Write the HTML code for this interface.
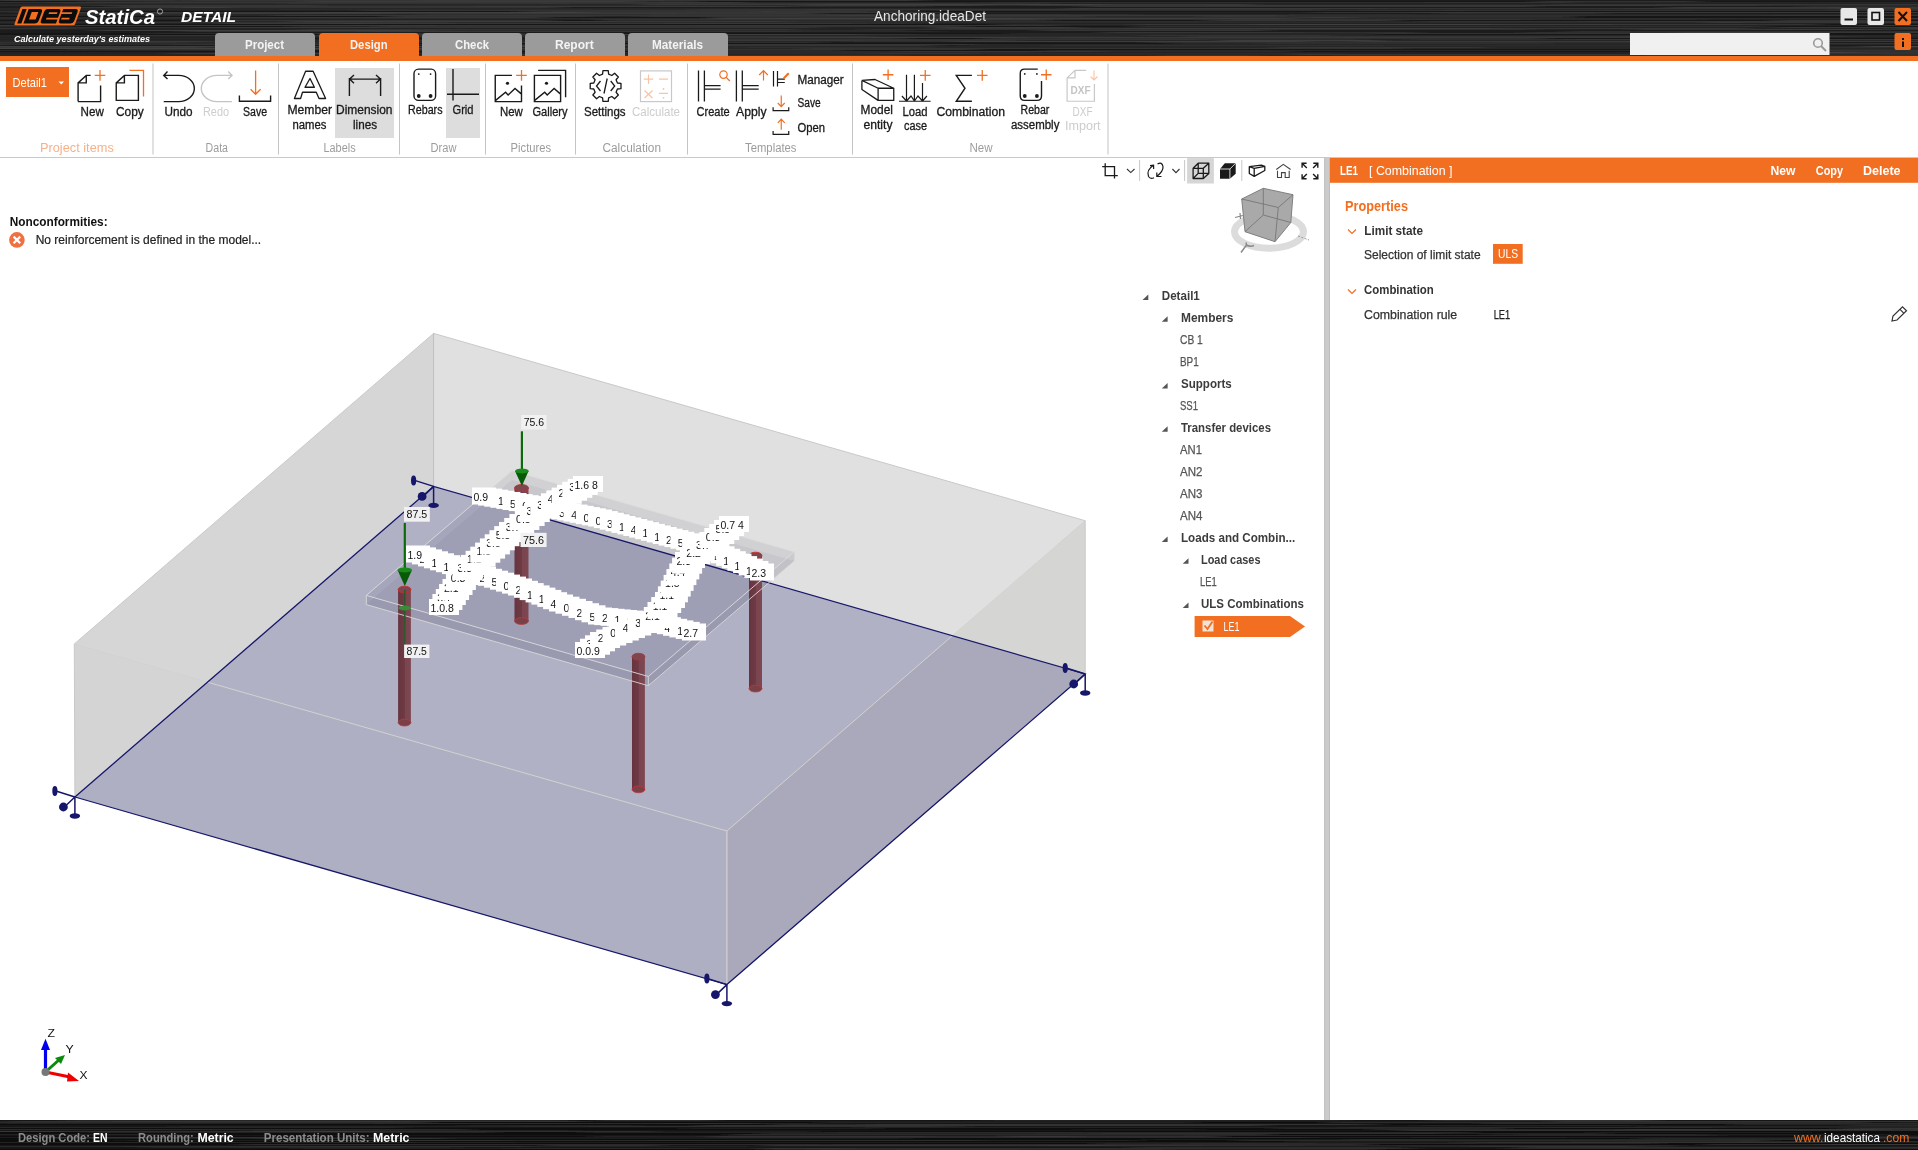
<!DOCTYPE html>
<html><head><meta charset="utf-8"><title>IDEA StatiCa Detail</title>
<style>html,body{margin:0;padding:0;background:#fff;overflow:hidden}svg{display:block}text{font-family:"Liberation Sans",sans-serif}</style>
</head><body><svg width="1918" height="1150" viewBox="0 0 1918 1150">
<rect x="0" y="0" width="1918" height="1150" fill="#ffffff" />
<defs><filter id="hblur" x="-5%" y="0" width="110%" height="100%"><feGaussianBlur stdDeviation="10 0.35"/></filter></defs>
<rect x="0" y="0" width="1918" height="56" fill="#141414" />
<g filter="url(#hblur)">
<rect x="-50" y="0" width="2018" height="1" fill="#1c1c1c" />
<rect x="417" y="0" width="504" height="1" fill="#444444" opacity="0.6"/>
<rect x="-3" y="0" width="174" height="1" fill="#4a4a4a" opacity="0.6"/>
<rect x="185" y="0" width="474" height="1" fill="#424242" opacity="0.6"/>
<rect x="37" y="0" width="619" height="1" fill="#363636" opacity="0.6"/>
<rect x="-50" y="1" width="2018" height="1" fill="#131313" />
<rect x="152" y="1" width="544" height="1" fill="#3d3d3d" opacity="0.6"/>
<rect x="86" y="1" width="346" height="1" fill="#323232" opacity="0.6"/>
<rect x="1538" y="1" width="160" height="1" fill="#4a4a4a" opacity="0.6"/>
<rect x="307" y="1" width="328" height="1" fill="#444444" opacity="0.6"/>
<rect x="-50" y="2" width="2018" height="1" fill="#262626" />
<rect x="53" y="2" width="690" height="1" fill="#424242" opacity="0.6"/>
<rect x="1424" y="2" width="150" height="1" fill="#373737" opacity="0.6"/>
<rect x="-10" y="2" width="670" height="1" fill="#343434" opacity="0.6"/>
<rect x="986" y="2" width="529" height="1" fill="#343434" opacity="0.6"/>
<rect x="-50" y="3" width="2018" height="1" fill="#232323" />
<rect x="282" y="3" width="684" height="1" fill="#393939" opacity="0.6"/>
<rect x="540" y="3" width="205" height="1" fill="#424242" opacity="0.6"/>
<rect x="569" y="3" width="481" height="1" fill="#333333" opacity="0.6"/>
<rect x="57" y="3" width="677" height="1" fill="#313131" opacity="0.6"/>
<rect x="-50" y="4" width="2018" height="1" fill="#252525" />
<rect x="643" y="4" width="608" height="1" fill="#454545" opacity="0.6"/>
<rect x="1551" y="4" width="421" height="1" fill="#3e3e3e" opacity="0.6"/>
<rect x="1656" y="4" width="470" height="1" fill="#393939" opacity="0.6"/>
<rect x="817" y="4" width="284" height="1" fill="#464646" opacity="0.6"/>
<rect x="-50" y="5" width="2018" height="1" fill="#2a2a2a" />
<rect x="799" y="5" width="183" height="1" fill="#424242" opacity="0.6"/>
<rect x="1029" y="5" width="637" height="1" fill="#3f3f3f" opacity="0.6"/>
<rect x="1206" y="5" width="559" height="1" fill="#393939" opacity="0.6"/>
<rect x="99" y="5" width="220" height="1" fill="#404040" opacity="0.6"/>
<rect x="-50" y="6" width="2018" height="1" fill="#1f1f1f" />
<rect x="475" y="6" width="450" height="1" fill="#343434" opacity="0.6"/>
<rect x="1802" y="6" width="531" height="1" fill="#313131" opacity="0.6"/>
<rect x="117" y="6" width="671" height="1" fill="#424242" opacity="0.6"/>
<rect x="1085" y="6" width="448" height="1" fill="#464646" opacity="0.6"/>
<rect x="-50" y="7" width="2018" height="1" fill="#1d1d1d" />
<rect x="1834" y="7" width="693" height="1" fill="#494949" opacity="0.6"/>
<rect x="1668" y="7" width="170" height="1" fill="#4a4a4a" opacity="0.6"/>
<rect x="183" y="7" width="376" height="1" fill="#3f3f3f" opacity="0.6"/>
<rect x="66" y="7" width="162" height="1" fill="#474747" opacity="0.6"/>
<rect x="-50" y="8" width="2018" height="1" fill="#282828" />
<rect x="1068" y="8" width="691" height="1" fill="#454545" opacity="0.6"/>
<rect x="1625" y="8" width="391" height="1" fill="#464646" opacity="0.6"/>
<rect x="1380" y="8" width="455" height="1" fill="#303030" opacity="0.6"/>
<rect x="1691" y="8" width="463" height="1" fill="#353535" opacity="0.6"/>
<rect x="-50" y="9" width="2018" height="1" fill="#252525" />
<rect x="279" y="9" width="605" height="1" fill="#313131" opacity="0.6"/>
<rect x="693" y="9" width="394" height="1" fill="#343434" opacity="0.6"/>
<rect x="814" y="9" width="507" height="1" fill="#3c3c3c" opacity="0.6"/>
<rect x="1833" y="9" width="182" height="1" fill="#353535" opacity="0.6"/>
<rect x="-50" y="10" width="2018" height="1" fill="#202020" />
<rect x="1445" y="10" width="662" height="1" fill="#383838" opacity="0.6"/>
<rect x="360" y="10" width="540" height="1" fill="#414141" opacity="0.6"/>
<rect x="940" y="10" width="525" height="1" fill="#3b3b3b" opacity="0.6"/>
<rect x="1358" y="10" width="336" height="1" fill="#343434" opacity="0.6"/>
<rect x="-50" y="11" width="2018" height="1" fill="#141414" />
<rect x="521" y="11" width="254" height="1" fill="#373737" opacity="0.6"/>
<rect x="755" y="11" width="112" height="1" fill="#3f3f3f" opacity="0.6"/>
<rect x="546" y="11" width="369" height="1" fill="#393939" opacity="0.6"/>
<rect x="-184" y="11" width="249" height="1" fill="#3d3d3d" opacity="0.6"/>
<rect x="-50" y="12" width="2018" height="1" fill="#232323" />
<rect x="1312" y="12" width="679" height="1" fill="#3a3a3a" opacity="0.6"/>
<rect x="314" y="12" width="627" height="1" fill="#434343" opacity="0.6"/>
<rect x="21" y="12" width="567" height="1" fill="#484848" opacity="0.6"/>
<rect x="1407" y="12" width="507" height="1" fill="#3c3c3c" opacity="0.6"/>
<rect x="-50" y="13" width="2018" height="1" fill="#1e1e1e" />
<rect x="224" y="13" width="593" height="1" fill="#444444" opacity="0.6"/>
<rect x="1440" y="13" width="163" height="1" fill="#363636" opacity="0.6"/>
<rect x="75" y="13" width="313" height="1" fill="#3e3e3e" opacity="0.6"/>
<rect x="464" y="13" width="212" height="1" fill="#3a3a3a" opacity="0.6"/>
<rect x="-50" y="14" width="2018" height="1" fill="#252525" />
<rect x="15" y="14" width="204" height="1" fill="#303030" opacity="0.6"/>
<rect x="419" y="14" width="649" height="1" fill="#333333" opacity="0.6"/>
<rect x="1289" y="14" width="126" height="1" fill="#323232" opacity="0.6"/>
<rect x="651" y="14" width="485" height="1" fill="#343434" opacity="0.6"/>
<rect x="-50" y="15" width="2018" height="1" fill="#262626" />
<rect x="833" y="15" width="455" height="1" fill="#434343" opacity="0.6"/>
<rect x="1291" y="15" width="585" height="1" fill="#333333" opacity="0.6"/>
<rect x="272" y="15" width="599" height="1" fill="#3e3e3e" opacity="0.6"/>
<rect x="1767" y="15" width="595" height="1" fill="#393939" opacity="0.6"/>
<rect x="-50" y="16" width="2018" height="1" fill="#141414" />
<rect x="390" y="16" width="204" height="1" fill="#474747" opacity="0.6"/>
<rect x="1203" y="16" width="371" height="1" fill="#3f3f3f" opacity="0.6"/>
<rect x="461" y="16" width="628" height="1" fill="#303030" opacity="0.6"/>
<rect x="640" y="16" width="640" height="1" fill="#3b3b3b" opacity="0.6"/>
<rect x="-50" y="17" width="2018" height="1" fill="#161616" />
<rect x="-90" y="17" width="640" height="1" fill="#393939" opacity="0.6"/>
<rect x="172" y="17" width="367" height="1" fill="#404040" opacity="0.6"/>
<rect x="1302" y="17" width="271" height="1" fill="#3b3b3b" opacity="0.6"/>
<rect x="712" y="17" width="645" height="1" fill="#414141" opacity="0.6"/>
<rect x="-50" y="18" width="2018" height="1" fill="#2a2a2a" />
<rect x="1859" y="18" width="437" height="1" fill="#444444" opacity="0.6"/>
<rect x="713" y="18" width="299" height="1" fill="#494949" opacity="0.6"/>
<rect x="780" y="18" width="510" height="1" fill="#474747" opacity="0.6"/>
<rect x="728" y="18" width="304" height="1" fill="#404040" opacity="0.6"/>
<rect x="-50" y="19" width="2018" height="1" fill="#212121" />
<rect x="1256" y="19" width="129" height="1" fill="#303030" opacity="0.6"/>
<rect x="944" y="19" width="583" height="1" fill="#383838" opacity="0.6"/>
<rect x="593" y="19" width="452" height="1" fill="#3e3e3e" opacity="0.6"/>
<rect x="1231" y="19" width="473" height="1" fill="#323232" opacity="0.6"/>
<rect x="-50" y="20" width="2018" height="1" fill="#191919" />
<rect x="218" y="20" width="332" height="1" fill="#3f3f3f" opacity="0.6"/>
<rect x="605" y="20" width="445" height="1" fill="#363636" opacity="0.6"/>
<rect x="1776" y="20" width="101" height="1" fill="#3f3f3f" opacity="0.6"/>
<rect x="1209" y="20" width="186" height="1" fill="#4a4a4a" opacity="0.6"/>
<rect x="-50" y="21" width="2018" height="1" fill="#272727" />
<rect x="291" y="21" width="497" height="1" fill="#494949" opacity="0.6"/>
<rect x="616" y="21" width="589" height="1" fill="#353535" opacity="0.6"/>
<rect x="1577" y="21" width="440" height="1" fill="#323232" opacity="0.6"/>
<rect x="1421" y="21" width="574" height="1" fill="#3c3c3c" opacity="0.6"/>
<rect x="-50" y="22" width="2018" height="1" fill="#292929" />
<rect x="147" y="22" width="262" height="1" fill="#353535" opacity="0.6"/>
<rect x="320" y="22" width="128" height="1" fill="#343434" opacity="0.6"/>
<rect x="1706" y="22" width="249" height="1" fill="#434343" opacity="0.6"/>
<rect x="1742" y="22" width="458" height="1" fill="#343434" opacity="0.6"/>
<rect x="-50" y="23" width="2018" height="1" fill="#232323" />
<rect x="336" y="23" width="121" height="1" fill="#303030" opacity="0.6"/>
<rect x="220" y="23" width="639" height="1" fill="#474747" opacity="0.6"/>
<rect x="370" y="23" width="544" height="1" fill="#363636" opacity="0.6"/>
<rect x="664" y="23" width="128" height="1" fill="#383838" opacity="0.6"/>
<rect x="-50" y="24" width="2018" height="1" fill="#181818" />
<rect x="999" y="24" width="613" height="1" fill="#373737" opacity="0.6"/>
<rect x="1135" y="24" width="365" height="1" fill="#414141" opacity="0.6"/>
<rect x="1516" y="24" width="234" height="1" fill="#313131" opacity="0.6"/>
<rect x="1249" y="24" width="569" height="1" fill="#454545" opacity="0.6"/>
<rect x="-50" y="25" width="2018" height="1" fill="#242424" />
<rect x="1916" y="25" width="530" height="1" fill="#4a4a4a" opacity="0.6"/>
<rect x="1854" y="25" width="233" height="1" fill="#414141" opacity="0.6"/>
<rect x="421" y="25" width="636" height="1" fill="#404040" opacity="0.6"/>
<rect x="-124" y="25" width="550" height="1" fill="#484848" opacity="0.6"/>
<rect x="-50" y="26" width="2018" height="1" fill="#171717" />
<rect x="-184" y="26" width="253" height="1" fill="#353535" opacity="0.6"/>
<rect x="379" y="26" width="584" height="1" fill="#434343" opacity="0.6"/>
<rect x="292" y="26" width="669" height="1" fill="#313131" opacity="0.6"/>
<rect x="1135" y="26" width="630" height="1" fill="#404040" opacity="0.6"/>
<rect x="-50" y="27" width="2018" height="1" fill="#232323" />
<rect x="1776" y="27" width="208" height="1" fill="#414141" opacity="0.6"/>
<rect x="32" y="27" width="354" height="1" fill="#363636" opacity="0.6"/>
<rect x="934" y="27" width="143" height="1" fill="#484848" opacity="0.6"/>
<rect x="200" y="27" width="619" height="1" fill="#3e3e3e" opacity="0.6"/>
<rect x="-50" y="28" width="2018" height="1" fill="#232323" />
<rect x="-86" y="28" width="164" height="1" fill="#3e3e3e" opacity="0.6"/>
<rect x="1133" y="28" width="617" height="1" fill="#434343" opacity="0.6"/>
<rect x="1897" y="28" width="304" height="1" fill="#464646" opacity="0.6"/>
<rect x="935" y="28" width="563" height="1" fill="#404040" opacity="0.6"/>
<rect x="-50" y="29" width="2018" height="1" fill="#232323" />
<rect x="1758" y="29" width="619" height="1" fill="#373737" opacity="0.6"/>
<rect x="863" y="29" width="672" height="1" fill="#363636" opacity="0.6"/>
<rect x="1633" y="29" width="240" height="1" fill="#3d3d3d" opacity="0.6"/>
<rect x="298" y="29" width="501" height="1" fill="#3e3e3e" opacity="0.6"/>
<rect x="-50" y="30" width="2018" height="1" fill="#1c1c1c" />
<rect x="97" y="30" width="346" height="1" fill="#3d3d3d" opacity="0.6"/>
<rect x="99" y="30" width="317" height="1" fill="#454545" opacity="0.6"/>
<rect x="1040" y="30" width="225" height="1" fill="#484848" opacity="0.6"/>
<rect x="432" y="30" width="474" height="1" fill="#343434" opacity="0.6"/>
<rect x="-50" y="31" width="2018" height="1" fill="#1a1a1a" />
<rect x="362" y="31" width="578" height="1" fill="#373737" opacity="0.6"/>
<rect x="185" y="31" width="507" height="1" fill="#3f3f3f" opacity="0.6"/>
<rect x="466" y="31" width="329" height="1" fill="#353535" opacity="0.6"/>
<rect x="1567" y="31" width="627" height="1" fill="#3c3c3c" opacity="0.6"/>
<rect x="-50" y="32" width="2018" height="1" fill="#1c1c1c" />
<rect x="1525" y="32" width="300" height="1" fill="#3b3b3b" opacity="0.6"/>
<rect x="1104" y="32" width="194" height="1" fill="#474747" opacity="0.6"/>
<rect x="1298" y="32" width="119" height="1" fill="#3a3a3a" opacity="0.6"/>
<rect x="1678" y="32" width="551" height="1" fill="#464646" opacity="0.6"/>
<rect x="-50" y="33" width="2018" height="1" fill="#121212" />
<rect x="1374" y="33" width="439" height="1" fill="#404040" opacity="0.6"/>
<rect x="1010" y="33" width="624" height="1" fill="#323232" opacity="0.6"/>
<rect x="262" y="33" width="334" height="1" fill="#333333" opacity="0.6"/>
<rect x="144" y="33" width="371" height="1" fill="#383838" opacity="0.6"/>
<rect x="-50" y="34" width="2018" height="1" fill="#131313" />
<rect x="543" y="34" width="376" height="1" fill="#484848" opacity="0.6"/>
<rect x="330" y="34" width="532" height="1" fill="#454545" opacity="0.6"/>
<rect x="859" y="34" width="515" height="1" fill="#343434" opacity="0.6"/>
<rect x="1908" y="34" width="684" height="1" fill="#3f3f3f" opacity="0.6"/>
<rect x="-50" y="35" width="2018" height="1" fill="#282828" />
<rect x="1139" y="35" width="191" height="1" fill="#383838" opacity="0.6"/>
<rect x="35" y="35" width="287" height="1" fill="#3d3d3d" opacity="0.6"/>
<rect x="96" y="35" width="375" height="1" fill="#303030" opacity="0.6"/>
<rect x="162" y="35" width="366" height="1" fill="#323232" opacity="0.6"/>
<rect x="-50" y="36" width="2018" height="1" fill="#252525" />
<rect x="710" y="36" width="168" height="1" fill="#383838" opacity="0.6"/>
<rect x="298" y="36" width="564" height="1" fill="#303030" opacity="0.6"/>
<rect x="1189" y="36" width="666" height="1" fill="#3d3d3d" opacity="0.6"/>
<rect x="897" y="36" width="232" height="1" fill="#313131" opacity="0.6"/>
<rect x="-50" y="37" width="2018" height="1" fill="#222222" />
<rect x="776" y="37" width="212" height="1" fill="#353535" opacity="0.6"/>
<rect x="872" y="37" width="151" height="1" fill="#353535" opacity="0.6"/>
<rect x="626" y="37" width="419" height="1" fill="#444444" opacity="0.6"/>
<rect x="1049" y="37" width="643" height="1" fill="#484848" opacity="0.6"/>
<rect x="-50" y="38" width="2018" height="1" fill="#181818" />
<rect x="987" y="38" width="556" height="1" fill="#404040" opacity="0.6"/>
<rect x="528" y="38" width="377" height="1" fill="#3b3b3b" opacity="0.6"/>
<rect x="-126" y="38" width="356" height="1" fill="#313131" opacity="0.6"/>
<rect x="-138" y="38" width="118" height="1" fill="#474747" opacity="0.6"/>
<rect x="-50" y="39" width="2018" height="1" fill="#222222" />
<rect x="576" y="39" width="626" height="1" fill="#3f3f3f" opacity="0.6"/>
<rect x="806" y="39" width="557" height="1" fill="#333333" opacity="0.6"/>
<rect x="1570" y="39" width="606" height="1" fill="#414141" opacity="0.6"/>
<rect x="1410" y="39" width="618" height="1" fill="#393939" opacity="0.6"/>
<rect x="-50" y="40" width="2018" height="1" fill="#282828" />
<rect x="681" y="40" width="335" height="1" fill="#3a3a3a" opacity="0.6"/>
<rect x="613" y="40" width="243" height="1" fill="#3c3c3c" opacity="0.6"/>
<rect x="1223" y="40" width="155" height="1" fill="#4a4a4a" opacity="0.6"/>
<rect x="331" y="40" width="114" height="1" fill="#323232" opacity="0.6"/>
<rect x="-50" y="41" width="2018" height="1" fill="#262626" />
<rect x="846" y="41" width="541" height="1" fill="#353535" opacity="0.6"/>
<rect x="26" y="41" width="186" height="1" fill="#454545" opacity="0.6"/>
<rect x="1360" y="41" width="618" height="1" fill="#454545" opacity="0.6"/>
<rect x="954" y="41" width="348" height="1" fill="#464646" opacity="0.6"/>
<rect x="-50" y="42" width="2018" height="1" fill="#1b1b1b" />
<rect x="-15" y="42" width="570" height="1" fill="#353535" opacity="0.6"/>
<rect x="445" y="42" width="375" height="1" fill="#3e3e3e" opacity="0.6"/>
<rect x="-186" y="42" width="369" height="1" fill="#3b3b3b" opacity="0.6"/>
<rect x="1147" y="42" width="660" height="1" fill="#3a3a3a" opacity="0.6"/>
<rect x="-50" y="43" width="2018" height="1" fill="#191919" />
<rect x="-59" y="43" width="416" height="1" fill="#363636" opacity="0.6"/>
<rect x="1260" y="43" width="287" height="1" fill="#303030" opacity="0.6"/>
<rect x="1173" y="43" width="490" height="1" fill="#323232" opacity="0.6"/>
<rect x="1744" y="43" width="385" height="1" fill="#404040" opacity="0.6"/>
<rect x="-50" y="44" width="2018" height="1" fill="#262626" />
<rect x="623" y="44" width="354" height="1" fill="#404040" opacity="0.6"/>
<rect x="-180" y="44" width="193" height="1" fill="#383838" opacity="0.6"/>
<rect x="167" y="44" width="247" height="1" fill="#3c3c3c" opacity="0.6"/>
<rect x="-30" y="44" width="503" height="1" fill="#303030" opacity="0.6"/>
<rect x="-50" y="45" width="2018" height="1" fill="#1b1b1b" />
<rect x="1046" y="45" width="338" height="1" fill="#323232" opacity="0.6"/>
<rect x="435" y="45" width="498" height="1" fill="#484848" opacity="0.6"/>
<rect x="1135" y="45" width="606" height="1" fill="#343434" opacity="0.6"/>
<rect x="963" y="45" width="248" height="1" fill="#313131" opacity="0.6"/>
<rect x="-50" y="46" width="2018" height="1" fill="#282828" />
<rect x="1901" y="46" width="539" height="1" fill="#474747" opacity="0.6"/>
<rect x="1870" y="46" width="242" height="1" fill="#404040" opacity="0.6"/>
<rect x="1865" y="46" width="682" height="1" fill="#4a4a4a" opacity="0.6"/>
<rect x="-135" y="46" width="698" height="1" fill="#494949" opacity="0.6"/>
<rect x="-50" y="47" width="2018" height="1" fill="#282828" />
<rect x="741" y="47" width="187" height="1" fill="#303030" opacity="0.6"/>
<rect x="-29" y="47" width="236" height="1" fill="#444444" opacity="0.6"/>
<rect x="1277" y="47" width="207" height="1" fill="#3c3c3c" opacity="0.6"/>
<rect x="1648" y="47" width="671" height="1" fill="#313131" opacity="0.6"/>
<rect x="-50" y="48" width="2018" height="1" fill="#262626" />
<rect x="-123" y="48" width="644" height="1" fill="#454545" opacity="0.6"/>
<rect x="801" y="48" width="601" height="1" fill="#383838" opacity="0.6"/>
<rect x="-187" y="48" width="567" height="1" fill="#494949" opacity="0.6"/>
<rect x="87" y="48" width="615" height="1" fill="#414141" opacity="0.6"/>
<rect x="-50" y="49" width="2018" height="1" fill="#141414" />
<rect x="70" y="49" width="585" height="1" fill="#383838" opacity="0.6"/>
<rect x="104" y="49" width="371" height="1" fill="#373737" opacity="0.6"/>
<rect x="640" y="49" width="336" height="1" fill="#474747" opacity="0.6"/>
<rect x="1685" y="49" width="605" height="1" fill="#3c3c3c" opacity="0.6"/>
<rect x="-50" y="50" width="2018" height="1" fill="#141414" />
<rect x="1762" y="50" width="394" height="1" fill="#484848" opacity="0.6"/>
<rect x="-9" y="50" width="303" height="1" fill="#323232" opacity="0.6"/>
<rect x="403" y="50" width="439" height="1" fill="#383838" opacity="0.6"/>
<rect x="1046" y="50" width="681" height="1" fill="#343434" opacity="0.6"/>
<rect x="-50" y="51" width="2018" height="1" fill="#121212" />
<rect x="1775" y="51" width="162" height="1" fill="#3f3f3f" opacity="0.6"/>
<rect x="900" y="51" width="201" height="1" fill="#464646" opacity="0.6"/>
<rect x="691" y="51" width="601" height="1" fill="#393939" opacity="0.6"/>
<rect x="1915" y="51" width="392" height="1" fill="#3e3e3e" opacity="0.6"/>
<rect x="-50" y="52" width="2018" height="1" fill="#202020" />
<rect x="1710" y="52" width="221" height="1" fill="#414141" opacity="0.6"/>
<rect x="616" y="52" width="419" height="1" fill="#323232" opacity="0.6"/>
<rect x="1737" y="52" width="117" height="1" fill="#393939" opacity="0.6"/>
<rect x="1679" y="52" width="178" height="1" fill="#4a4a4a" opacity="0.6"/>
<rect x="-50" y="53" width="2018" height="1" fill="#222222" />
<rect x="1640" y="53" width="375" height="1" fill="#3c3c3c" opacity="0.6"/>
<rect x="659" y="53" width="315" height="1" fill="#323232" opacity="0.6"/>
<rect x="169" y="53" width="245" height="1" fill="#474747" opacity="0.6"/>
<rect x="872" y="53" width="468" height="1" fill="#343434" opacity="0.6"/>
<rect x="-50" y="54" width="2018" height="1" fill="#252525" />
<rect x="1883" y="54" width="386" height="1" fill="#333333" opacity="0.6"/>
<rect x="1295" y="54" width="336" height="1" fill="#3f3f3f" opacity="0.6"/>
<rect x="1791" y="54" width="503" height="1" fill="#303030" opacity="0.6"/>
<rect x="451" y="54" width="103" height="1" fill="#3f3f3f" opacity="0.6"/>
<rect x="-50" y="55" width="2018" height="1" fill="#272727" />
<rect x="1646" y="55" width="515" height="1" fill="#393939" opacity="0.6"/>
<rect x="376" y="55" width="526" height="1" fill="#3b3b3b" opacity="0.6"/>
<rect x="1340" y="55" width="423" height="1" fill="#333333" opacity="0.6"/>
<rect x="1157" y="55" width="101" height="1" fill="#3a3a3a" opacity="0.6"/>
</g>
<rect x="0" y="56" width="1918" height="5" fill="#f26f21" />
<g transform="translate(20.8,6.6) skewX(-20)">
<rect x="0" y="0" width="60.7" height="18.7" rx="1.5" fill="#f26f21"/>
<rect x="2.5" y="2.3" width="4.2" height="14.5" fill="#0c0c0c"/>
<path d="M8.7,2.3 L20,2.3 Q23,2.3 23,5.3 L23,13.8 Q23,16.8 20,16.8 L8.7,16.8 Z" fill="#0c0c0c"/>
<rect x="12.9" y="5.4" width="6.6" height="7.4" fill="#f26f21"/>
<path d="M27.8,2.3 L38.5,2.3 Q41.3,2.3 41.3,5.3 L41.3,11.2 L29.8,11.2 L29.8,12.9 L41.3,12.9 L41.3,16.8 L27.8,16.8 Q25.2,16.8 25.2,13.8 L25.2,5.3 Q25.2,2.3 27.8,2.3 Z" fill="#0c0c0c"/>
<rect x="30.4" y="5.6" width="8.4" height="1.9" fill="#f26f21"/>
<path d="M43.3,2.3 L55.6,2.3 Q58.6,2.3 58.6,5.3 L58.6,13.8 Q58.6,16.8 55.6,16.8 L46.3,16.8 Q43.3,16.8 43.3,13.8 L43.3,11.2 L45,11.2 L45,12.9 L53,12.9 L53,11.2 L43.3,11.2 L43.3,7.4 L53.5,7.4 L53.5,5.6 L43.3,5.6 Z" fill="#0c0c0c"/>
</g>
<text x="85.0" y="23.5" font-size="20" fill="#ffffff" font-weight="bold" font-style="italic" text-anchor="start" textLength="70.0" lengthAdjust="spacingAndGlyphs" >StatiCa</text>
<circle cx="160" cy="11.5" r="2.6" fill="none" stroke="#bbbbbb" stroke-width="0.8"/>
<text x="181.0" y="21.5" font-size="15" fill="#ffffff" font-weight="bold" font-style="italic" text-anchor="start" textLength="55.0" lengthAdjust="spacingAndGlyphs" >DETAIL</text>
<text x="14.0" y="42.4" font-size="9.5" fill="#ffffff" font-weight="bold" font-style="italic" text-anchor="start" textLength="136.0" lengthAdjust="spacingAndGlyphs" >Calculate yesterday&#x27;s estimates</text>
<text x="874.0" y="21.3" font-size="14" fill="#e6e6e6" font-weight="normal" font-style="normal" text-anchor="start" textLength="112.0" lengthAdjust="spacingAndGlyphs" >Anchoring.ideaDet</text>
<path d="M215,56 L215,37 Q215,33 219,33 L311,33 Q315,33 315,37 L315,56 Z" fill="#9b9b9b" stroke="none" stroke-width="1" />
<text x="245.0" y="48.8" font-size="13" fill="#f4f4f4" font-weight="bold" font-style="normal" text-anchor="start" textLength="39.0" lengthAdjust="spacingAndGlyphs" >Project</text>
<path d="M319,56 L319,37 Q319,33 323,33 L415,33 Q419,33 419,37 L419,56 Z" fill="#f26f21" stroke="none" stroke-width="1" />
<text x="350.0" y="48.8" font-size="13" fill="#f4f4f4" font-weight="bold" font-style="normal" text-anchor="start" textLength="37.5" lengthAdjust="spacingAndGlyphs" >Design</text>
<path d="M422,56 L422,37 Q422,33 426,33 L518,33 Q522,33 522,37 L522,56 Z" fill="#9b9b9b" stroke="none" stroke-width="1" />
<text x="455.0" y="48.8" font-size="13" fill="#f4f4f4" font-weight="bold" font-style="normal" text-anchor="start" textLength="34.0" lengthAdjust="spacingAndGlyphs" >Check</text>
<path d="M525,56 L525,37 Q525,33 529,33 L621,33 Q625,33 625,37 L625,56 Z" fill="#9b9b9b" stroke="none" stroke-width="1" />
<text x="555.0" y="48.8" font-size="13" fill="#f4f4f4" font-weight="bold" font-style="normal" text-anchor="start" textLength="38.7" lengthAdjust="spacingAndGlyphs" >Report</text>
<path d="M628,56 L628,37 Q628,33 632,33 L724,33 Q728,33 728,37 L728,56 Z" fill="#9b9b9b" stroke="none" stroke-width="1" />
<text x="652.0" y="48.8" font-size="13" fill="#f4f4f4" font-weight="bold" font-style="normal" text-anchor="start" textLength="51.0" lengthAdjust="spacingAndGlyphs" >Materials</text>
<rect x="1840.5" y="8" width="16.5" height="17" rx="2" fill="#e8e8e8"/>
<rect x="1844.5" y="18.5" width="8.5" height="2" fill="#111" />
<rect x="1867.5" y="8" width="16.5" height="17" rx="2" fill="#e8e8e8"/>
<rect x="1872" y="12.5" width="7.5" height="7.5" fill="none" stroke="#111" stroke-width="1.6"/>
<rect x="1894.5" y="8" width="16.5" height="17" rx="2" fill="#f26f21"/>
<path d="M1898.5,12 L1907,21 M1907,12 L1898.5,21" fill="none" stroke="#111" stroke-width="2" />
<rect x="1894.5" y="33" width="16.5" height="17" rx="2" fill="#f26f21"/>
<rect x="1902" y="38" width="2" height="2" fill="#111" />
<rect x="1902" y="41.5" width="2" height="5.5" fill="#111" />
<rect x="1630" y="33" width="199.5" height="22" fill="#f0f0f0" />
<circle cx="1818" cy="43" r="4.3" fill="none" stroke="#9a9a9a" stroke-width="1.6"/>
<line x1="1821" y1="46" x2="1826" y2="51" stroke="#9a9a9a" stroke-width="2" />
<rect x="0" y="157" width="1918" height="1" fill="#c9c9c9" />
<rect x="152.5" y="63.5" width="1" height="91" fill="#c4c4c4" />
<rect x="278.0" y="63.5" width="1" height="91" fill="#c4c4c4" />
<rect x="399.0" y="63.5" width="1" height="91" fill="#c4c4c4" />
<rect x="485.0" y="63.5" width="1" height="91" fill="#c4c4c4" />
<rect x="575.0" y="63.5" width="1" height="91" fill="#c4c4c4" />
<rect x="687.0" y="63.5" width="1" height="91" fill="#c4c4c4" />
<rect x="852.0" y="63.5" width="1" height="91" fill="#c4c4c4" />
<rect x="1107.5" y="63.5" width="1" height="91" fill="#c4c4c4" />
<rect x="335" y="68" width="59" height="70" fill="#dddddd" />
<rect x="446" y="68" width="34" height="70" fill="#dddddd" />
<rect x="6" y="67" width="63" height="30" fill="#f26f21" />
<text x="12.5" y="86.6" font-size="13" fill="#ffffff" font-weight="normal" font-style="normal" text-anchor="start" textLength="34.5" lengthAdjust="spacingAndGlyphs" >Detail1</text>
<path d="M58.5,81.5 L64,81.5 L61.25,84.5 Z" fill="#ffffff" stroke="none" stroke-width="1" />
<text x="80.6" y="115.8" font-size="12" fill="#1a1a1a" font-weight="normal" font-style="normal" text-anchor="start" textLength="23.2" lengthAdjust="spacingAndGlyphs"  stroke="#1a1a1a" stroke-width="0.3">New</text>
<text x="116.0" y="115.8" font-size="12" fill="#1a1a1a" font-weight="normal" font-style="normal" text-anchor="start" textLength="27.8" lengthAdjust="spacingAndGlyphs"  stroke="#1a1a1a" stroke-width="0.3">Copy</text>
<text x="164.4" y="115.8" font-size="12" fill="#1a1a1a" font-weight="normal" font-style="normal" text-anchor="start" textLength="28.1" lengthAdjust="spacingAndGlyphs"  stroke="#1a1a1a" stroke-width="0.3">Undo</text>
<text x="243.0" y="115.8" font-size="12" fill="#1a1a1a" font-weight="normal" font-style="normal" text-anchor="start" textLength="24.0" lengthAdjust="spacingAndGlyphs"  stroke="#1a1a1a" stroke-width="0.3">Save</text>
<text x="287.5" y="113.8" font-size="12" fill="#1a1a1a" font-weight="normal" font-style="normal" text-anchor="start" textLength="44.5" lengthAdjust="spacingAndGlyphs"  stroke="#1a1a1a" stroke-width="0.3">Member</text>
<text x="292.5" y="128.5" font-size="12" fill="#1a1a1a" font-weight="normal" font-style="normal" text-anchor="start" textLength="34.0" lengthAdjust="spacingAndGlyphs"  stroke="#1a1a1a" stroke-width="0.3">names</text>
<text x="336.0" y="113.8" font-size="12" fill="#1a1a1a" font-weight="normal" font-style="normal" text-anchor="start" textLength="56.5" lengthAdjust="spacingAndGlyphs"  stroke="#1a1a1a" stroke-width="0.3">Dimension</text>
<text x="353.0" y="128.5" font-size="12" fill="#1a1a1a" font-weight="normal" font-style="normal" text-anchor="start" textLength="24.0" lengthAdjust="spacingAndGlyphs"  stroke="#1a1a1a" stroke-width="0.3">lines</text>
<text x="408.0" y="113.8" font-size="12" fill="#1a1a1a" font-weight="normal" font-style="normal" text-anchor="start" textLength="34.5" lengthAdjust="spacingAndGlyphs"  stroke="#1a1a1a" stroke-width="0.3">Rebars</text>
<text x="452.5" y="113.8" font-size="12" fill="#1a1a1a" font-weight="normal" font-style="normal" text-anchor="start" textLength="21.0" lengthAdjust="spacingAndGlyphs"  stroke="#1a1a1a" stroke-width="0.3">Grid</text>
<text x="500.0" y="115.8" font-size="12" fill="#1a1a1a" font-weight="normal" font-style="normal" text-anchor="start" textLength="22.8" lengthAdjust="spacingAndGlyphs"  stroke="#1a1a1a" stroke-width="0.3">New</text>
<text x="532.5" y="115.8" font-size="12" fill="#1a1a1a" font-weight="normal" font-style="normal" text-anchor="start" textLength="35.0" lengthAdjust="spacingAndGlyphs"  stroke="#1a1a1a" stroke-width="0.3">Gallery</text>
<text x="584.0" y="115.8" font-size="12" fill="#1a1a1a" font-weight="normal" font-style="normal" text-anchor="start" textLength="41.6" lengthAdjust="spacingAndGlyphs"  stroke="#1a1a1a" stroke-width="0.3">Settings</text>
<text x="696.6" y="115.8" font-size="12" fill="#1a1a1a" font-weight="normal" font-style="normal" text-anchor="start" textLength="33.1" lengthAdjust="spacingAndGlyphs"  stroke="#1a1a1a" stroke-width="0.3">Create</text>
<text x="736.0" y="115.8" font-size="12" fill="#1a1a1a" font-weight="normal" font-style="normal" text-anchor="start" textLength="30.5" lengthAdjust="spacingAndGlyphs"  stroke="#1a1a1a" stroke-width="0.3">Apply</text>
<text x="797.5" y="83.5" font-size="12" fill="#1a1a1a" font-weight="normal" font-style="normal" text-anchor="start" textLength="46.2" lengthAdjust="spacingAndGlyphs"  stroke="#1a1a1a" stroke-width="0.3">Manager</text>
<text x="797.5" y="107.2" font-size="12" fill="#1a1a1a" font-weight="normal" font-style="normal" text-anchor="start" textLength="23.1" lengthAdjust="spacingAndGlyphs"  stroke="#1a1a1a" stroke-width="0.3">Save</text>
<text x="797.5" y="131.6" font-size="12" fill="#1a1a1a" font-weight="normal" font-style="normal" text-anchor="start" textLength="27.5" lengthAdjust="spacingAndGlyphs"  stroke="#1a1a1a" stroke-width="0.3">Open</text>
<text x="860.6" y="113.8" font-size="12" fill="#1a1a1a" font-weight="normal" font-style="normal" text-anchor="start" textLength="32.4" lengthAdjust="spacingAndGlyphs"  stroke="#1a1a1a" stroke-width="0.3">Model</text>
<text x="863.5" y="128.5" font-size="12" fill="#1a1a1a" font-weight="normal" font-style="normal" text-anchor="start" textLength="29.0" lengthAdjust="spacingAndGlyphs"  stroke="#1a1a1a" stroke-width="0.3">entity</text>
<text x="902.5" y="115.8" font-size="12" fill="#1a1a1a" font-weight="normal" font-style="normal" text-anchor="start" textLength="25.0" lengthAdjust="spacingAndGlyphs"  stroke="#1a1a1a" stroke-width="0.3">Load</text>
<text x="904.0" y="130.4" font-size="12" fill="#1a1a1a" font-weight="normal" font-style="normal" text-anchor="start" textLength="23.0" lengthAdjust="spacingAndGlyphs"  stroke="#1a1a1a" stroke-width="0.3">case</text>
<text x="936.5" y="115.8" font-size="12" fill="#1a1a1a" font-weight="normal" font-style="normal" text-anchor="start" textLength="68.5" lengthAdjust="spacingAndGlyphs"  stroke="#1a1a1a" stroke-width="0.3">Combination</text>
<text x="1020.6" y="114.2" font-size="12" fill="#1a1a1a" font-weight="normal" font-style="normal" text-anchor="start" textLength="28.8" lengthAdjust="spacingAndGlyphs"  stroke="#1a1a1a" stroke-width="0.3">Rebar</text>
<text x="1011.0" y="128.8" font-size="12" fill="#1a1a1a" font-weight="normal" font-style="normal" text-anchor="start" textLength="48.4" lengthAdjust="spacingAndGlyphs"  stroke="#1a1a1a" stroke-width="0.3">assembly</text>
<text x="203.0" y="115.8" font-size="12" fill="#cdcdcd" font-weight="normal" font-style="normal" text-anchor="start" textLength="26.0" lengthAdjust="spacingAndGlyphs" >Redo</text>
<text x="632.0" y="115.8" font-size="12" fill="#cdcdcd" font-weight="normal" font-style="normal" text-anchor="start" textLength="48.0" lengthAdjust="spacingAndGlyphs" >Calculate</text>
<text x="1072.5" y="115.8" font-size="12" fill="#cdcdcd" font-weight="normal" font-style="normal" text-anchor="start" textLength="20.0" lengthAdjust="spacingAndGlyphs" >DXF</text>
<text x="1065.0" y="130.4" font-size="12" fill="#cdcdcd" font-weight="normal" font-style="normal" text-anchor="start" textLength="35.6" lengthAdjust="spacingAndGlyphs" >Import</text>
<text x="40.0" y="151.6" font-size="12" fill="#f6b18b" font-weight="normal" font-style="normal" text-anchor="start" textLength="73.8" lengthAdjust="spacingAndGlyphs" >Project items</text>
<text x="205.6" y="151.6" font-size="12" fill="#9c9c9c" font-weight="normal" font-style="normal" text-anchor="start" textLength="22.4" lengthAdjust="spacingAndGlyphs" >Data</text>
<text x="323.5" y="151.6" font-size="12" fill="#9c9c9c" font-weight="normal" font-style="normal" text-anchor="start" textLength="32.1" lengthAdjust="spacingAndGlyphs" >Labels</text>
<text x="430.6" y="151.6" font-size="12" fill="#9c9c9c" font-weight="normal" font-style="normal" text-anchor="start" textLength="25.9" lengthAdjust="spacingAndGlyphs" >Draw</text>
<text x="510.6" y="151.6" font-size="12" fill="#9c9c9c" font-weight="normal" font-style="normal" text-anchor="start" textLength="40.4" lengthAdjust="spacingAndGlyphs" >Pictures</text>
<text x="602.5" y="151.6" font-size="12" fill="#9c9c9c" font-weight="normal" font-style="normal" text-anchor="start" textLength="58.5" lengthAdjust="spacingAndGlyphs" >Calculation</text>
<text x="745.0" y="151.6" font-size="12" fill="#9c9c9c" font-weight="normal" font-style="normal" text-anchor="start" textLength="51.5" lengthAdjust="spacingAndGlyphs" >Templates</text>
<text x="969.4" y="151.6" font-size="12" fill="#9c9c9c" font-weight="normal" font-style="normal" text-anchor="start" textLength="23.1" lengthAdjust="spacingAndGlyphs" >New</text>
<path d="M78.1,101.6 L78.1,82.9 L86.25,75.4 L90.6,75.4 M100.6,85.4 L100.6,101.6 L78.1,101.6 M78.1,82.9 L86.25,82.9 L86.25,75.4" fill="none" stroke="#1a1a1a" stroke-width="1.4" stroke-linejoin="miter"/>
<path d="M94.7,75.4 L105.3,75.4 M100,70.10000000000001 L100,80.7" fill="none" stroke="#f26f21" stroke-width="1.3" />
<path d="M116.25,100.4 L116.25,82.9 L124.4,75.4 L138.4,75.4 L138.4,100.4 Z M116.25,82.9 L124.4,82.9 L124.4,75.4" fill="none" stroke="#1a1a1a" stroke-width="1.4" />
<path d="M129.4,70.4 L143.5,70.4 L143.5,96.6" fill="none" stroke="#f26f21" stroke-width="1.3" />
<path d="M163.75,101.6 L178.75,101.6 A15.6,13.1 0 0 0 178.75,75.4 L163.75,75.4 M167.5,71.6 L163.75,75.4 L167.5,79.1" fill="none" stroke="#1a1a1a" stroke-width="1.4" />
<path d="M231.9,101.6 L216.9,101.6 A15.6,13.1 0 0 1 216.9,75.4 L232,75.4 M228.3,71.6 L232,75.4 L228.3,79.1" fill="none" stroke="#c4c4c4" stroke-width="1.4" />
<path d="M255.6,70.4 L255.6,94.1 M250.6,89.3 L255.6,94.3 L260.6,89.3" fill="none" stroke="#f26f21" stroke-width="1.3" />
<path d="M239.4,95.4 L239.4,101.25 L270.6,101.25 L270.6,95.4" fill="none" stroke="#1a1a1a" stroke-width="1.4" />
<path d="M294.4,98.5 L305.6,71.25 L313.1,71.25 L325.6,98.5 L319,98.5 L316.25,92.25 L302.5,92.25 L300.6,98.5 Z M305,87.25 L310,78.5 L314.4,87.25 Z" fill="none" stroke="#1a1a1a" stroke-width="1.3" stroke-linejoin="round"/>
<path d="M349.4,77.9 L349.4,96 M380.6,77.9 L380.6,96 M349.4,79.1 L380.6,79.1 M354,75 L349.6,79.1 L354,83.2 M376,75 L380.4,79.1 L376,83.2" fill="none" stroke="#1a1a1a" stroke-width="1.4" />
<rect x="414" y="69.1" width="21.6" height="31.3" rx="4.5" fill="none" stroke="#1a1a1a" stroke-width="1.4"/>
<circle cx="418.75" cy="74.1" r="0.9" fill="#1a1a1a"/>
<circle cx="430.6" cy="74.1" r="0.9" fill="#1a1a1a"/>
<circle cx="418.75" cy="96" r="1.9" fill="#1a1a1a"/>
<circle cx="430.6" cy="96" r="1.9" fill="#1a1a1a"/>
<path d="M453,69 L453,100.5 M447,94.2 L479,94.2" fill="none" stroke="#1a1a1a" stroke-width="1.4" />
<path d="M511.9,75.4 L495.25,75.4 L495.25,101.6 L521.5,101.6 L521.5,85.4 M495.6,100.4 L505.6,92.25 L508.1,95 L515,88.5 L521.5,94.1" fill="none" stroke="#1a1a1a" stroke-width="1.4" />
<circle cx="507.5" cy="83.25" r="1.6" fill="#1a1a1a"/>
<path d="M516.2,75.4 L526.8,75.4 M521.5,70.10000000000001 L521.5,80.7" fill="none" stroke="#f26f21" stroke-width="1.3" />
<path d="M534.4,75.4 L560.6,75.4 L560.6,101.6 L534.4,101.6 Z M534.7,100.4 L544.7,92.25 L547.2,95 L554.1,88.5 L560.6,94.1 M538.1,70.4 L565.6,70.4 L565.6,97.25" fill="none" stroke="#1a1a1a" stroke-width="1.4" />
<circle cx="546.5" cy="83.25" r="1.6" fill="#1a1a1a"/>
<path d="M602.58,74.18 L602.96,70.62 L608.24,70.62 L608.62,74.18 L611.82,75.51 L614.61,73.26 L618.34,76.99 L616.09,79.78 L617.42,82.98 L620.98,83.36 L620.98,88.64 L617.42,89.02 L616.09,92.22 L618.34,95.01 L614.61,98.74 L611.82,96.49 L608.62,97.82 L608.24,101.38 L602.96,101.38 L602.58,97.82 L599.38,96.49 L596.59,98.74 L592.86,95.01 L595.11,92.22 L593.78,89.02 L590.22,88.64 L590.22,83.36 L593.78,82.98 L595.11,79.78 L592.86,76.99 L596.59,73.26 L599.38,75.51 Z" fill="none" stroke="#1a1a1a" stroke-width="1.3" stroke-linejoin="round"/>
<path d="M600.5,81 L596.5,86 L600.5,91 M610.7,81 L614.7,86 L610.7,91 M607.2,78.5 L604,93.5" fill="none" stroke="#1a1a1a" stroke-width="1.3" />
<rect x="640.5" y="70.9" width="31" height="30.7" fill="none" stroke="#c8c8c8" stroke-width="1.2"/>
<path d="M648.5,74.5 L648.5,84 M643.8,79.2 L653.2,79.2 M659,79.2 L668,79.2 M644.5,90.5 L652.5,98 M652.5,90.5 L644.5,98 M659,93.4 L668,93.4" fill="none" stroke="#f9c3a6" stroke-width="1.2" />
<circle cx="663.5" cy="89" r="0.9" fill="#f9c3a6"/><circle cx="663.5" cy="97.8" r="0.9" fill="#f9c3a6"/>
<path d="M698.5,70.4 L698.5,101.6 M704.4,70.4 L704.4,101.6 M704.4,85.6 L720.6,85.6 M704.4,89.1 L720.6,89.1" fill="none" stroke="#1a1a1a" stroke-width="1.3" />
<circle cx="723.5" cy="74.6" r="3.7" fill="none" stroke="#f26f21" stroke-width="1.2"/>
<line x1="726.2" y1="77.4" x2="729.8" y2="81" stroke="#f26f21" stroke-width="1.3" />
<path d="M736.4,70.4 L736.4,101.6 M742.3,70.4 L742.3,101.6 M742.3,85.6 L758.7,85.6 M742.3,89.1 L758.7,89.1" fill="none" stroke="#1a1a1a" stroke-width="1.3" />
<path d="M763.5,80.5 L763.5,70.6 M759.2,75 L763.5,70.6 L767.8,75" fill="none" stroke="#f26f21" stroke-width="1.2" />
<path d="M773.5,71 L773.5,86.6 M777.5,71 L777.5,86.6 M777.5,79.1 L784.8,79.1 M777.5,82.5 L784.8,82.5" fill="none" stroke="#1a1a1a" stroke-width="1.2" />
<path d="M783,77.5 L788,72.5 L789.5,74 L784.5,79 Z" fill="#f26f21" stroke="none" stroke-width="1" />
<path d="M781.25,95.4 L781.25,106.5 M777.8,103 L781.25,106.6 L784.7,103" fill="none" stroke="#f26f21" stroke-width="1.2" />
<path d="M773.1,107.25 L773.1,110.6 L788.75,110.6 L788.75,107.25" fill="none" stroke="#1a1a1a" stroke-width="1.2" />
<path d="M781.25,129.8 L781.25,119.3 M777.8,122.8 L781.25,119.2 L784.7,122.8" fill="none" stroke="#f26f21" stroke-width="1.2" />
<path d="M773.1,131 L773.1,134.4 L788.75,134.4 L788.75,131" fill="none" stroke="#1a1a1a" stroke-width="1.2" />
<path d="M878.1,88.25 L893.75,88.25 L893.75,100.4 L878.1,100.4 Z M861.9,80.4 L875,79.5 L893.75,88.25 M861.9,80.4 L878.1,88.25 M861.9,80.4 L861.9,89.5 L878.1,100.4" fill="none" stroke="#1a1a1a" stroke-width="1.3" stroke-linejoin="round"/>
<path d="M882.8000000000001,74.75 L893.4,74.75 M888.1,69.45 L888.1,80.05" fill="none" stroke="#f26f21" stroke-width="1.3" />
<path d="M899,101.25 L930.6,101.25 M906.5,74.75 L906.5,101 M914.4,74.75 L914.4,101 M922.5,82.9 L922.5,101 M901.9,96 L906.5,101 L911,96 L914.4,101 L918,96 L922.5,101 L926.9,96" fill="none" stroke="#1a1a1a" stroke-width="1.2" />
<path d="M919.95,75.4 L930.55,75.4 M925.25,70.10000000000001 L925.25,80.7" fill="none" stroke="#f26f21" stroke-width="1.3" />
<path d="M971.9,75.4 L956.25,75.4 L965,88.25 L956.25,101.25 L971.9,101.25" fill="none" stroke="#1a1a1a" stroke-width="1.4" />
<path d="M976.95,75.4 L987.55,75.4 M982.25,70.10000000000001 L982.25,80.7" fill="none" stroke="#f26f21" stroke-width="1.3" />
<path d="M1037.75,69.1 L1024.5,69.1 Q1020.25,69.1 1020.25,73.4 L1020.25,96.1 Q1020.25,100.4 1024.5,100.4 L1037.2,100.4 Q1041.5,100.4 1041.5,96.1 L1041.5,81" fill="none" stroke="#1a1a1a" stroke-width="1.4" />
<circle cx="1024.75" cy="73.9" r="0.9" fill="#1a1a1a"/>
<circle cx="1036.9" cy="73.9" r="0.9" fill="#1a1a1a"/>
<circle cx="1024.75" cy="96" r="1.9" fill="#1a1a1a"/>
<circle cx="1036.9" cy="96" r="1.9" fill="#1a1a1a"/>
<path d="M1040.95,74.75 L1051.55,74.75 M1046.25,69.45 L1046.25,80.05" fill="none" stroke="#f26f21" stroke-width="1.3" />
<path d="M1086.25,70.4 L1075,70.4 L1067.1,77.9 L1067.1,101.25 L1094.4,101.25 L1094.4,84.1 M1067.1,77.9 L1075,77.9 L1075,70.4" fill="none" stroke="#c8c8c8" stroke-width="1.2" />
<text x="1070.5" y="94.0" font-size="10" fill="#c4c4c4" font-weight="bold" font-style="normal" text-anchor="start" textLength="20.0" lengthAdjust="spacingAndGlyphs" >DXF</text>
<path d="M1094,70.5 L1094,80 M1090.5,76.5 L1094,80 L1097.5,76.5" fill="none" stroke="#f9c3a6" stroke-width="1.1" />
<rect x="1187.1" y="158.1" width="26.8" height="25.4" fill="#d6d6d6" />
<rect x="1139.1" y="160" width="1" height="21" fill="#c8c8c8" />
<rect x="1184.1" y="160" width="1" height="21" fill="#c8c8c8" />
<rect x="1241.3" y="160" width="1" height="21" fill="#c8c8c8" />
<path d="M1102.2,166.6 L1114.5,166.6 L1114.5,178.5 M1105.2,163.2 L1105.2,175.7 L1117.8,175.7" fill="none" stroke="#1a1a1a" stroke-width="1.3" />
<path d="M1127,169 L1130.75,172.6 L1134.5,169" fill="none" stroke="#333" stroke-width="1.1" />
<path d="M1153.6,165.2 Q1146,170 1148.5,176.5 Q1150.5,179.5 1154,177.7 M1150,165.6 L1153.6,165.2 L1153.6,169" fill="none" stroke="#1a1a1a" stroke-width="1.2" />
<path d="M1157.5,164 Q1162,161.5 1163,166.5 Q1163.5,171 1156.8,176.5 M1161.5,176.5 L1156.8,176.5 L1156.8,172.6" fill="none" stroke="#1a1a1a" stroke-width="1.2" />
<path d="M1172.4,169 L1176,172.6 L1179.5,169" fill="none" stroke="#333" stroke-width="1.1" />
<path d="M1193.1,168.3 L1203.3,168.3 L1203.3,178.5 L1193.1,178.5 Z M1193.1,168.3 L1198.2,163.2 L1208.8,163.2 L1203.3,168.3 M1208.8,163.2 L1208.8,173.4 L1203.3,178.5 M1198.2,163.2 L1198.2,173.4 L1208.8,173.4 M1198.2,173.4 L1193.1,178.5" fill="none" stroke="#1a1a1a" stroke-width="1.3" stroke-linejoin="round"/>
<path d="M1220,169 L1224.8,163.2 L1235.7,163.2 L1235.7,173.8 L1229.9,178.8 L1220,178.8 Z" fill="#1a1a1a" stroke="none" stroke-width="1" />
<path d="M1220,169 L1229.9,169 L1235.7,163.2 M1229.9,169 L1229.9,178.8" fill="none" stroke="#ffffff" stroke-width="0.8" />
<path d="M1249.3,166.7 L1254.2,168.4 L1254.2,176.4 L1249.3,173.5 Z M1249.3,166.7 L1261.3,165.1 L1264.8,166.3 L1254.2,168.4 M1264.8,166.3 L1264.8,170.5 L1254.2,176.4" fill="none" stroke="#1a1a1a" stroke-width="1.3" stroke-linejoin="round"/>
<path d="M1276.3,169.5 L1283.3,164.4 L1290.6,169.5 M1277.5,170.7 L1277.5,177.5 L1281.5,177.5 L1281.5,172.6 L1285.2,172.6 L1285.2,177.5 L1289.2,177.5 L1289.2,170.7" fill="none" stroke="#444" stroke-width="1.1" />
<path d="M1302.1,167.7 L1302.1,163.2 L1306.6,163.2 M1302.1,163.2 L1306.8,167.89999999999998" fill="none" stroke="#1a1a1a" stroke-width="1.4" />
<path d="M1317.8,167.7 L1317.8,163.2 L1313.3,163.2 M1317.8,163.2 L1313.1,167.89999999999998" fill="none" stroke="#1a1a1a" stroke-width="1.4" />
<path d="M1302.1,174.2 L1302.1,178.7 L1306.6,178.7 M1302.1,178.7 L1306.8,174.0" fill="none" stroke="#1a1a1a" stroke-width="1.4" />
<path d="M1317.8,174.2 L1317.8,178.7 L1313.3,178.7 M1317.8,178.7 L1313.1,174.0" fill="none" stroke="#1a1a1a" stroke-width="1.4" />
<rect x="1324.3" y="158" width="5.6" height="962" fill="#cbcbcb" />
<rect x="1324.3" y="158" width="0.8" height="962" fill="#b8b8b8" />
<rect x="1329.1" y="158" width="0.8" height="962" fill="#b8b8b8" />
<rect x="1330" y="158" width="588" height="24.8" fill="#f26f21" />
<text x="1340.0" y="175.0" font-size="13" fill="#fff" font-weight="bold" font-style="normal" text-anchor="start" textLength="18.0" lengthAdjust="spacingAndGlyphs" >LE1</text>
<text x="1369.0" y="175.0" font-size="13" fill="#fff" font-weight="normal" font-style="normal" text-anchor="start" textLength="83.5" lengthAdjust="spacingAndGlyphs" >[ Combination ]</text>
<text x="1770.6" y="175.0" font-size="13" fill="#fff" font-weight="bold" font-style="normal" text-anchor="start" textLength="24.9" lengthAdjust="spacingAndGlyphs" >New</text>
<text x="1815.8" y="175.0" font-size="13" fill="#fff" font-weight="bold" font-style="normal" text-anchor="start" textLength="27.2" lengthAdjust="spacingAndGlyphs" >Copy</text>
<text x="1863.0" y="175.0" font-size="13" fill="#fff" font-weight="bold" font-style="normal" text-anchor="start" textLength="37.6" lengthAdjust="spacingAndGlyphs" >Delete</text>
<text x="1345.0" y="211.4" font-size="15" fill="#f26f21" font-weight="bold" font-style="normal" text-anchor="start" textLength="63.0" lengthAdjust="spacingAndGlyphs" >Properties</text>
<path d="M1348,229.5 L1352,233.5 L1356,229.5" fill="none" stroke="#f26f21" stroke-width="1.2" />
<text x="1364.3" y="234.8" font-size="13" fill="#333" font-weight="bold" font-style="normal" text-anchor="start" textLength="58.7" lengthAdjust="spacingAndGlyphs" >Limit state</text>
<text x="1364.0" y="259.0" font-size="12" fill="#333" font-weight="normal" font-style="normal" text-anchor="start" textLength="116.6" lengthAdjust="spacingAndGlyphs"  stroke="#333" stroke-width="0.25">Selection of limit state</text>
<rect x="1493" y="244" width="29.7" height="19.8" fill="#f26f21" />
<text x="1498.0" y="257.8" font-size="12" fill="#fff" font-weight="normal" font-style="normal" text-anchor="start" textLength="20.0" lengthAdjust="spacingAndGlyphs" >ULS</text>
<path d="M1348,289.5 L1352,293.5 L1356,289.5" fill="none" stroke="#f26f21" stroke-width="1.2" />
<text x="1364.0" y="294.0" font-size="13" fill="#333" font-weight="bold" font-style="normal" text-anchor="start" textLength="69.8" lengthAdjust="spacingAndGlyphs" >Combination</text>
<text x="1364.0" y="319.0" font-size="12" fill="#333" font-weight="normal" font-style="normal" text-anchor="start" textLength="93.2" lengthAdjust="spacingAndGlyphs"  stroke="#333" stroke-width="0.25">Combination rule</text>
<text x="1493.7" y="318.6" font-size="12" fill="#222" font-weight="normal" font-style="normal" text-anchor="start" textLength="16.5" lengthAdjust="spacingAndGlyphs"  stroke="#222" stroke-width="0.25">LE1</text>
<path d="M1892,321 L1893,316 L1902.5,306.8 L1906.5,310.8 L1897,320 Z M1900,309.3 L1904,313.3" fill="none" stroke="#333" stroke-width="1.2" />
<text x="1161.8" y="300.0" font-size="13" fill="#3c3c3c" font-weight="bold" font-style="normal" text-anchor="start" textLength="38.0" lengthAdjust="spacingAndGlyphs" >Detail1</text>
<path d="M1142.5,300.0 L1148.3,300.0 L1148.3,294.5 Z" fill="#555" stroke="none" stroke-width="1" />
<text x="1181.0" y="321.8" font-size="13" fill="#3c3c3c" font-weight="bold" font-style="normal" text-anchor="start" textLength="52.4" lengthAdjust="spacingAndGlyphs" >Members</text>
<path d="M1161.8,321.8 L1167.6,321.8 L1167.6,316.3 Z" fill="#555" stroke="none" stroke-width="1" />
<text x="1180.0" y="343.7" font-size="12" fill="#555555" font-weight="normal" font-style="normal" text-anchor="start" textLength="22.8" lengthAdjust="spacingAndGlyphs"  stroke="#555555" stroke-width="0.25">CB 1</text>
<text x="1180.0" y="366.2" font-size="12" fill="#555555" font-weight="normal" font-style="normal" text-anchor="start" textLength="18.7" lengthAdjust="spacingAndGlyphs"  stroke="#555555" stroke-width="0.25">BP1</text>
<text x="1181.0" y="388.4" font-size="13" fill="#3c3c3c" font-weight="bold" font-style="normal" text-anchor="start" textLength="50.8" lengthAdjust="spacingAndGlyphs" >Supports</text>
<path d="M1161.8,388.4 L1167.6,388.4 L1167.6,382.9 Z" fill="#555" stroke="none" stroke-width="1" />
<text x="1180.0" y="410.3" font-size="12" fill="#555555" font-weight="normal" font-style="normal" text-anchor="start" textLength="18.0" lengthAdjust="spacingAndGlyphs"  stroke="#555555" stroke-width="0.25">SS1</text>
<text x="1181.0" y="431.8" font-size="13" fill="#3c3c3c" font-weight="bold" font-style="normal" text-anchor="start" textLength="90.0" lengthAdjust="spacingAndGlyphs" >Transfer devices</text>
<path d="M1161.8,431.8 L1167.6,431.8 L1167.6,426.3 Z" fill="#555" stroke="none" stroke-width="1" />
<text x="1180.0" y="454.3" font-size="12" fill="#555555" font-weight="normal" font-style="normal" text-anchor="start" textLength="21.9" lengthAdjust="spacingAndGlyphs"  stroke="#555555" stroke-width="0.25">AN1</text>
<text x="1180.0" y="476.2" font-size="12" fill="#555555" font-weight="normal" font-style="normal" text-anchor="start" textLength="22.5" lengthAdjust="spacingAndGlyphs"  stroke="#555555" stroke-width="0.25">AN2</text>
<text x="1180.0" y="498.0" font-size="12" fill="#555555" font-weight="normal" font-style="normal" text-anchor="start" textLength="22.5" lengthAdjust="spacingAndGlyphs"  stroke="#555555" stroke-width="0.25">AN3</text>
<text x="1180.0" y="520.3" font-size="12" fill="#555555" font-weight="normal" font-style="normal" text-anchor="start" textLength="22.5" lengthAdjust="spacingAndGlyphs"  stroke="#555555" stroke-width="0.25">AN4</text>
<text x="1181.0" y="542.1" font-size="13" fill="#3c3c3c" font-weight="bold" font-style="normal" text-anchor="start" textLength="114.2" lengthAdjust="spacingAndGlyphs" >Loads and Combin...</text>
<path d="M1161.8,542.1 L1167.6,542.1 L1167.6,536.6 Z" fill="#555" stroke="none" stroke-width="1" />
<text x="1201.0" y="563.7" font-size="13" fill="#3c3c3c" font-weight="bold" font-style="normal" text-anchor="start" textLength="59.5" lengthAdjust="spacingAndGlyphs" >Load cases</text>
<path d="M1182.7,563.7 L1188.5,563.7 L1188.5,558.2 Z" fill="#555" stroke="none" stroke-width="1" />
<text x="1200.0" y="585.6" font-size="12" fill="#555555" font-weight="normal" font-style="normal" text-anchor="start" textLength="16.7" lengthAdjust="spacingAndGlyphs"  stroke="#555555" stroke-width="0.25">LE1</text>
<text x="1201.0" y="608.0" font-size="13" fill="#3c3c3c" font-weight="bold" font-style="normal" text-anchor="start" textLength="103.0" lengthAdjust="spacingAndGlyphs" >ULS Combinations</text>
<path d="M1182.7,608.0 L1188.5,608.0 L1188.5,602.5 Z" fill="#555" stroke="none" stroke-width="1" />
<path d="M1194.6,616 L1290,616 L1305,626.5 L1290,637 L1194.6,637 Z" fill="#f26f21" stroke="none" stroke-width="1" />
<rect x="1202.5" y="620.5" width="11" height="11" fill="#f3e2d6" />
<path d="M1204.5,625.5 L1207.5,629 L1212.5,621.5" fill="none" stroke="#f26f21" stroke-width="1.8" />
<text x="1223.6" y="631.2" font-size="12" fill="#fff" font-weight="normal" font-style="normal" text-anchor="start" textLength="16.0" lengthAdjust="spacingAndGlyphs" >LE1</text>
<text x="9.7" y="225.8" font-size="12" fill="#111" font-weight="bold" font-style="normal" text-anchor="start" textLength="97.9" lengthAdjust="spacingAndGlyphs" >Nonconformities:</text>
<circle cx="16.9" cy="239.9" r="7.8" fill="#f1703f"/>
<path d="M13.6,236.6 L20.2,243.2 M20.2,236.6 L13.6,243.2" fill="none" stroke="#fff" stroke-width="2.2" />
<text x="35.7" y="243.8" font-size="12" fill="#222" font-weight="normal" font-style="normal" text-anchor="start" textLength="225.5" lengthAdjust="spacingAndGlyphs"  stroke="#222" stroke-width="0.2">No reinforcement is defined in the model...</text>
<rect x="0" y="1120" width="1918" height="30" fill="#141414" />
<g filter="url(#hblur)">
<rect x="-50" y="1120" width="2018" height="1" fill="#121212" />
<rect x="1431" y="1120" width="222" height="1" fill="#444444" opacity="0.6"/>
<rect x="601" y="1120" width="112" height="1" fill="#424242" opacity="0.6"/>
<rect x="987" y="1120" width="359" height="1" fill="#313131" opacity="0.6"/>
<rect x="66" y="1120" width="502" height="1" fill="#323232" opacity="0.6"/>
<rect x="-50" y="1121" width="2018" height="1" fill="#1a1a1a" />
<rect x="112" y="1121" width="469" height="1" fill="#434343" opacity="0.6"/>
<rect x="1553" y="1121" width="381" height="1" fill="#414141" opacity="0.6"/>
<rect x="-3" y="1121" width="387" height="1" fill="#292929" opacity="0.6"/>
<rect x="11" y="1121" width="392" height="1" fill="#3a3a3a" opacity="0.6"/>
<rect x="-50" y="1122" width="2018" height="1" fill="#0c0c0c" />
<rect x="821" y="1122" width="372" height="1" fill="#333333" opacity="0.6"/>
<rect x="1892" y="1122" width="423" height="1" fill="#2c2c2c" opacity="0.6"/>
<rect x="1329" y="1122" width="538" height="1" fill="#424242" opacity="0.6"/>
<rect x="-82" y="1122" width="509" height="1" fill="#434343" opacity="0.6"/>
<rect x="-50" y="1123" width="2018" height="1" fill="#191919" />
<rect x="633" y="1123" width="182" height="1" fill="#272727" opacity="0.6"/>
<rect x="1482" y="1123" width="561" height="1" fill="#393939" opacity="0.6"/>
<rect x="367" y="1123" width="393" height="1" fill="#353535" opacity="0.6"/>
<rect x="0" y="1123" width="663" height="1" fill="#2a2a2a" opacity="0.6"/>
<rect x="-50" y="1124" width="2018" height="1" fill="#0d0d0d" />
<rect x="1734" y="1124" width="524" height="1" fill="#303030" opacity="0.6"/>
<rect x="954" y="1124" width="404" height="1" fill="#2e2e2e" opacity="0.6"/>
<rect x="865" y="1124" width="515" height="1" fill="#3a3a3a" opacity="0.6"/>
<rect x="777" y="1124" width="408" height="1" fill="#353535" opacity="0.6"/>
<rect x="-50" y="1125" width="2018" height="1" fill="#191919" />
<rect x="1415" y="1125" width="222" height="1" fill="#2b2b2b" opacity="0.6"/>
<rect x="462" y="1125" width="176" height="1" fill="#2c2c2c" opacity="0.6"/>
<rect x="1850" y="1125" width="609" height="1" fill="#373737" opacity="0.6"/>
<rect x="701" y="1125" width="563" height="1" fill="#434343" opacity="0.6"/>
<rect x="-50" y="1126" width="2018" height="1" fill="#121212" />
<rect x="1643" y="1126" width="537" height="1" fill="#2a2a2a" opacity="0.6"/>
<rect x="588" y="1126" width="349" height="1" fill="#282828" opacity="0.6"/>
<rect x="515" y="1126" width="450" height="1" fill="#373737" opacity="0.6"/>
<rect x="173" y="1126" width="426" height="1" fill="#2d2d2d" opacity="0.6"/>
<rect x="-50" y="1127" width="2018" height="1" fill="#131313" />
<rect x="858" y="1127" width="683" height="1" fill="#2c2c2c" opacity="0.6"/>
<rect x="-118" y="1127" width="522" height="1" fill="#323232" opacity="0.6"/>
<rect x="1495" y="1127" width="636" height="1" fill="#2c2c2c" opacity="0.6"/>
<rect x="1343" y="1127" width="376" height="1" fill="#303030" opacity="0.6"/>
<rect x="-50" y="1128" width="2018" height="1" fill="#090909" />
<rect x="1840" y="1128" width="384" height="1" fill="#383838" opacity="0.6"/>
<rect x="1275" y="1128" width="228" height="1" fill="#3b3b3b" opacity="0.6"/>
<rect x="1861" y="1128" width="641" height="1" fill="#3a3a3a" opacity="0.6"/>
<rect x="684" y="1128" width="194" height="1" fill="#2e2e2e" opacity="0.6"/>
<rect x="-50" y="1129" width="2018" height="1" fill="#0f0f0f" />
<rect x="1375" y="1129" width="509" height="1" fill="#3a3a3a" opacity="0.6"/>
<rect x="1626" y="1129" width="542" height="1" fill="#444444" opacity="0.6"/>
<rect x="1078" y="1129" width="122" height="1" fill="#2a2a2a" opacity="0.6"/>
<rect x="-68" y="1129" width="535" height="1" fill="#3c3c3c" opacity="0.6"/>
<rect x="-50" y="1130" width="2018" height="1" fill="#171717" />
<rect x="1806" y="1130" width="100" height="1" fill="#282828" opacity="0.6"/>
<rect x="1403" y="1130" width="640" height="1" fill="#414141" opacity="0.6"/>
<rect x="1717" y="1130" width="559" height="1" fill="#2d2d2d" opacity="0.6"/>
<rect x="246" y="1130" width="329" height="1" fill="#2a2a2a" opacity="0.6"/>
<rect x="-50" y="1131" width="2018" height="1" fill="#0c0c0c" />
<rect x="246" y="1131" width="568" height="1" fill="#282828" opacity="0.6"/>
<rect x="-39" y="1131" width="101" height="1" fill="#3f3f3f" opacity="0.6"/>
<rect x="314" y="1131" width="338" height="1" fill="#383838" opacity="0.6"/>
<rect x="-47" y="1131" width="411" height="1" fill="#444444" opacity="0.6"/>
<rect x="-50" y="1132" width="2018" height="1" fill="#0c0c0c" />
<rect x="831" y="1132" width="640" height="1" fill="#3a3a3a" opacity="0.6"/>
<rect x="1591" y="1132" width="214" height="1" fill="#292929" opacity="0.6"/>
<rect x="88" y="1132" width="407" height="1" fill="#363636" opacity="0.6"/>
<rect x="585" y="1132" width="497" height="1" fill="#2e2e2e" opacity="0.6"/>
<rect x="-50" y="1133" width="2018" height="1" fill="#0f0f0f" />
<rect x="-196" y="1133" width="110" height="1" fill="#373737" opacity="0.6"/>
<rect x="1035" y="1133" width="571" height="1" fill="#2e2e2e" opacity="0.6"/>
<rect x="1095" y="1133" width="348" height="1" fill="#353535" opacity="0.6"/>
<rect x="761" y="1133" width="660" height="1" fill="#2d2d2d" opacity="0.6"/>
<rect x="-50" y="1134" width="2018" height="1" fill="#080808" />
<rect x="1486" y="1134" width="414" height="1" fill="#272727" opacity="0.6"/>
<rect x="-111" y="1134" width="298" height="1" fill="#353535" opacity="0.6"/>
<rect x="1520" y="1134" width="183" height="1" fill="#2e2e2e" opacity="0.6"/>
<rect x="733" y="1134" width="534" height="1" fill="#434343" opacity="0.6"/>
<rect x="-50" y="1135" width="2018" height="1" fill="#131313" />
<rect x="728" y="1135" width="604" height="1" fill="#272727" opacity="0.6"/>
<rect x="1184" y="1135" width="530" height="1" fill="#313131" opacity="0.6"/>
<rect x="1423" y="1135" width="302" height="1" fill="#262626" opacity="0.6"/>
<rect x="996" y="1135" width="616" height="1" fill="#282828" opacity="0.6"/>
<rect x="-50" y="1136" width="2018" height="1" fill="#0e0e0e" />
<rect x="1830" y="1136" width="305" height="1" fill="#2f2f2f" opacity="0.6"/>
<rect x="594" y="1136" width="336" height="1" fill="#343434" opacity="0.6"/>
<rect x="707" y="1136" width="371" height="1" fill="#3e3e3e" opacity="0.6"/>
<rect x="1008" y="1136" width="211" height="1" fill="#444444" opacity="0.6"/>
<rect x="-50" y="1137" width="2018" height="1" fill="#1b1b1b" />
<rect x="1830" y="1137" width="291" height="1" fill="#424242" opacity="0.6"/>
<rect x="714" y="1137" width="596" height="1" fill="#333333" opacity="0.6"/>
<rect x="31" y="1137" width="249" height="1" fill="#434343" opacity="0.6"/>
<rect x="1411" y="1137" width="155" height="1" fill="#2c2c2c" opacity="0.6"/>
<rect x="-50" y="1138" width="2018" height="1" fill="#080808" />
<rect x="381" y="1138" width="525" height="1" fill="#272727" opacity="0.6"/>
<rect x="46" y="1138" width="288" height="1" fill="#323232" opacity="0.6"/>
<rect x="1641" y="1138" width="421" height="1" fill="#3d3d3d" opacity="0.6"/>
<rect x="263" y="1138" width="181" height="1" fill="#434343" opacity="0.6"/>
<rect x="-50" y="1139" width="2018" height="1" fill="#0d0d0d" />
<rect x="1148" y="1139" width="295" height="1" fill="#2b2b2b" opacity="0.6"/>
<rect x="1715" y="1139" width="132" height="1" fill="#2f2f2f" opacity="0.6"/>
<rect x="1350" y="1139" width="482" height="1" fill="#303030" opacity="0.6"/>
<rect x="1612" y="1139" width="273" height="1" fill="#292929" opacity="0.6"/>
<rect x="-50" y="1140" width="2018" height="1" fill="#080808" />
<rect x="120" y="1140" width="386" height="1" fill="#282828" opacity="0.6"/>
<rect x="1239" y="1140" width="530" height="1" fill="#444444" opacity="0.6"/>
<rect x="306" y="1140" width="674" height="1" fill="#444444" opacity="0.6"/>
<rect x="649" y="1140" width="489" height="1" fill="#313131" opacity="0.6"/>
<rect x="-50" y="1141" width="2018" height="1" fill="#111111" />
<rect x="1571" y="1141" width="189" height="1" fill="#272727" opacity="0.6"/>
<rect x="1739" y="1141" width="300" height="1" fill="#313131" opacity="0.6"/>
<rect x="1628" y="1141" width="297" height="1" fill="#303030" opacity="0.6"/>
<rect x="1291" y="1141" width="585" height="1" fill="#262626" opacity="0.6"/>
<rect x="-50" y="1142" width="2018" height="1" fill="#1c1c1c" />
<rect x="1482" y="1142" width="353" height="1" fill="#3f3f3f" opacity="0.6"/>
<rect x="1457" y="1142" width="141" height="1" fill="#323232" opacity="0.6"/>
<rect x="-58" y="1142" width="575" height="1" fill="#282828" opacity="0.6"/>
<rect x="53" y="1142" width="363" height="1" fill="#2c2c2c" opacity="0.6"/>
<rect x="-50" y="1143" width="2018" height="1" fill="#0a0a0a" />
<rect x="1188" y="1143" width="471" height="1" fill="#2e2e2e" opacity="0.6"/>
<rect x="1172" y="1143" width="144" height="1" fill="#2e2e2e" opacity="0.6"/>
<rect x="1096" y="1143" width="382" height="1" fill="#2f2f2f" opacity="0.6"/>
<rect x="-185" y="1143" width="166" height="1" fill="#262626" opacity="0.6"/>
<rect x="-50" y="1144" width="2018" height="1" fill="#0f0f0f" />
<rect x="239" y="1144" width="586" height="1" fill="#3c3c3c" opacity="0.6"/>
<rect x="1707" y="1144" width="495" height="1" fill="#3f3f3f" opacity="0.6"/>
<rect x="828" y="1144" width="540" height="1" fill="#404040" opacity="0.6"/>
<rect x="1821" y="1144" width="235" height="1" fill="#434343" opacity="0.6"/>
<rect x="-50" y="1145" width="2018" height="1" fill="#171717" />
<rect x="549" y="1145" width="108" height="1" fill="#3f3f3f" opacity="0.6"/>
<rect x="1042" y="1145" width="254" height="1" fill="#393939" opacity="0.6"/>
<rect x="767" y="1145" width="435" height="1" fill="#414141" opacity="0.6"/>
<rect x="1108" y="1145" width="571" height="1" fill="#313131" opacity="0.6"/>
<rect x="-50" y="1146" width="2018" height="1" fill="#1b1b1b" />
<rect x="123" y="1146" width="624" height="1" fill="#2c2c2c" opacity="0.6"/>
<rect x="1404" y="1146" width="263" height="1" fill="#2d2d2d" opacity="0.6"/>
<rect x="1470" y="1146" width="166" height="1" fill="#3a3a3a" opacity="0.6"/>
<rect x="-62" y="1146" width="593" height="1" fill="#373737" opacity="0.6"/>
<rect x="-50" y="1147" width="2018" height="1" fill="#191919" />
<rect x="1134" y="1147" width="264" height="1" fill="#333333" opacity="0.6"/>
<rect x="230" y="1147" width="173" height="1" fill="#2e2e2e" opacity="0.6"/>
<rect x="144" y="1147" width="313" height="1" fill="#292929" opacity="0.6"/>
<rect x="1524" y="1147" width="610" height="1" fill="#3c3c3c" opacity="0.6"/>
<rect x="-50" y="1148" width="2018" height="1" fill="#161616" />
<rect x="509" y="1148" width="339" height="1" fill="#2a2a2a" opacity="0.6"/>
<rect x="1507" y="1148" width="571" height="1" fill="#393939" opacity="0.6"/>
<rect x="762" y="1148" width="651" height="1" fill="#414141" opacity="0.6"/>
<rect x="296" y="1148" width="400" height="1" fill="#2f2f2f" opacity="0.6"/>
<rect x="-50" y="1149" width="2018" height="1" fill="#101010" />
<rect x="896" y="1149" width="481" height="1" fill="#2e2e2e" opacity="0.6"/>
<rect x="866" y="1149" width="303" height="1" fill="#343434" opacity="0.6"/>
<rect x="813" y="1149" width="290" height="1" fill="#2d2d2d" opacity="0.6"/>
<rect x="764" y="1149" width="257" height="1" fill="#2f2f2f" opacity="0.6"/>
</g>
<text x="18.0" y="1141.8" font-size="12.5" fill="#8c8c8c" font-weight="bold" font-style="normal" text-anchor="start" textLength="72.0" lengthAdjust="spacingAndGlyphs" >Design Code:</text>
<text x="93.0" y="1141.8" font-size="12.5" fill="#fff" font-weight="bold" font-style="normal" text-anchor="start" textLength="14.5" lengthAdjust="spacingAndGlyphs" >EN</text>
<text x="138.0" y="1141.8" font-size="12.5" fill="#8c8c8c" font-weight="bold" font-style="normal" text-anchor="start" textLength="55.8" lengthAdjust="spacingAndGlyphs" >Rounding:</text>
<text x="197.5" y="1141.8" font-size="12.5" fill="#fff" font-weight="bold" font-style="normal" text-anchor="start" textLength="36.2" lengthAdjust="spacingAndGlyphs" >Metric</text>
<text x="263.8" y="1141.8" font-size="12.5" fill="#8c8c8c" font-weight="bold" font-style="normal" text-anchor="start" textLength="105.8" lengthAdjust="spacingAndGlyphs" >Presentation Units:</text>
<text x="373.0" y="1141.8" font-size="12.5" fill="#fff" font-weight="bold" font-style="normal" text-anchor="start" textLength="36.5" lengthAdjust="spacingAndGlyphs" >Metric</text>
<text x="1794.0" y="1141.8" font-size="12.5" fill="#f26f21" font-weight="normal" font-style="normal" text-anchor="start" textLength="29.5" lengthAdjust="spacingAndGlyphs" >www.</text>
<text x="1824.0" y="1141.8" font-size="12.5" fill="#fff" font-weight="normal" font-style="normal" text-anchor="start" textLength="56.0" lengthAdjust="spacingAndGlyphs" >ideastatica</text>
<text x="1883.0" y="1141.8" font-size="12.5" fill="#f26f21" font-weight="normal" font-style="normal" text-anchor="start" textLength="26.3" lengthAdjust="spacingAndGlyphs" >.com</text>
<line x1="45.5" y1="1072" x2="45.5" y2="1048" stroke="#0000ee" stroke-width="3.2" />
<path d="M41,1050 L45.5,1038.7 L50,1050 Z" fill="#0000ee" stroke="none" stroke-width="1" />
<line x1="45.5" y1="1072" x2="60" y2="1059" stroke="#0a8a0a" stroke-width="3" />
<path d="M55,1058 L65,1055 L61,1064 Z" fill="#0a8a0a" stroke="none" stroke-width="1" />
<line x1="45.5" y1="1072" x2="70" y2="1077" stroke="#ee0000" stroke-width="3" />
<path d="M68,1072.5 L79,1081 L67,1081.5 Z" fill="#ee0000" stroke="none" stroke-width="1" />
<circle cx="45.5" cy="1072" r="4" fill="#777"/>
<text x="47.5" y="1037.0" font-size="11" fill="#111" font-weight="normal" font-style="normal" text-anchor="start" textLength="7.5" lengthAdjust="spacingAndGlyphs" >Z</text>
<text x="65.5" y="1053.0" font-size="11" fill="#111" font-weight="normal" font-style="normal" text-anchor="start" textLength="8.2" lengthAdjust="spacingAndGlyphs" >Y</text>
<text x="79.5" y="1078.8" font-size="11" fill="#111" font-weight="normal" font-style="normal" text-anchor="start" textLength="8.0" lengthAdjust="spacingAndGlyphs" >X</text>
<ellipse cx="1269" cy="231.7" rx="34.5" ry="16.5" fill="none" stroke="#dcdcdc" stroke-width="7"/>
<polygon points="1241.7,199.0 1263.3,188.3 1293.0,194.7 1290.8,222.5 1275.0,241.7 1245.0,231.7" fill="#a9a9a9" />
<path d="M1241.7,199 L1278.3,207.5 L1293,194.7 M1278.3,207.5 L1275,241.7 M1263.3,188.3 L1263.3,215 L1245,231.7 M1263.3,215 L1290.8,222.5 M1241.7,199 L1263.3,188.3 L1293,194.7 L1290.8,222.5 L1275,241.7 L1245,231.7 Z" fill="none" stroke="#777777" stroke-width="0.9" />
<path d="M1241,252.5 L1246.5,245 M1246.5,245 Q1250,247 1254,245.5 M1246,242.5 L1246.8,246.5" fill="none" stroke="#8a8a8a" stroke-width="1.5" />
<path d="M1298,236 L1309,240" fill="none" stroke="#999" stroke-width="1" stroke-dasharray="2,1.5"/>
<path d="M1235,217.5 L1243,215.5 M1240,213 L1240.5,219" fill="none" stroke="#888" stroke-width="1.2" />
<g>
<polygon points="74.3,644.0 433.6,333.4 433.6,486.4 74.9,797.0" fill="#d6d6d6" />
<polygon points="433.6,333.4 1085.2,520.7 1085.2,674.0 433.6,486.4" fill="#e0e0e0" />
<polygon points="74.9,797.0 433.6,486.4 1085.2,674.0 726.9,984.6" fill="#b1b1c5" />
<polygon points="74.3,644.0 726.9,831.0 726.9,984.6 74.9,797.0" fill="#fdfdfd" style="mix-blend-mode:multiply"/>
<polygon points="726.9,831.0 1085.2,520.7 1085.2,674.0 726.9,984.6" fill="#f3f3f2" style="mix-blend-mode:multiply"/>
<polyline points="74.3,644.0 433.6,333.4 1085.2,520.7" fill="none" stroke="#c9c9c9" stroke-width="1" />
<polyline points="74.3,644.0 74.9,797.0" fill="none" stroke="#c9c9c9" stroke-width="1" />
<polyline points="1085.2,520.7 1085.2,674.0" fill="none" stroke="#c9c9c9" stroke-width="1" />
<polyline points="433.6,333.4 433.6,486.4" fill="none" stroke="#bdbdbd" stroke-width="1" />
<polyline points="74.3,644.0 726.9,831.0 1085.2,520.7" fill="none" stroke="#d2d2cf" stroke-width="1" />
<polyline points="726.9,831.0 726.9,984.6" fill="none" stroke="#dadad6" stroke-width="1" />
<polygon points="366.3,595.4 512.0,470.7 794.3,551.8 648.3,676.5" fill="#eeeef2" style="mix-blend-mode:multiply"/>
<polygon points="366.3,595.4 648.3,676.5 648.3,685.7 366.3,604.6" fill="#e6e6ec" style="mix-blend-mode:multiply"/>
<polygon points="648.3,676.5 794.3,551.8 794.3,561.0 648.3,685.7" fill="#e6e6ec" style="mix-blend-mode:multiply"/>
<polygon points="366.3,604.6 512.0,479.9 794.3,561.0 648.3,685.7" fill="#f4f4f6" style="mix-blend-mode:multiply"/>
<polyline points="74.9,797.0 433.6,486.4 1085.2,674.0 726.9,984.6 74.9,797.0" fill="none" stroke="#16166a" stroke-width="1.3" />
<path d="M74.9,797 L55.900000000000006,791 M74.9,797 L64.9,806.5 M74.9,797 L74.9,816" fill="none" stroke="#16166a" stroke-width="1.5" />
<ellipse cx="54.900000000000006" cy="791" rx="2.6" ry="5" fill="#16166a"/>
<circle cx="63.400000000000006" cy="807" r="4.4" fill="#16166a"/>
<ellipse cx="74.9" cy="816" rx="5.2" ry="2.7" fill="#16166a"/>
<path d="M433.6,486.4 L414.6,480.4 M433.6,486.4 L423.6,495.9 M433.6,486.4 L433.6,505.4" fill="none" stroke="#16166a" stroke-width="1.5" />
<ellipse cx="413.6" cy="480.4" rx="2.6" ry="5" fill="#16166a"/>
<circle cx="422.1" cy="496.4" r="4.4" fill="#16166a"/>
<ellipse cx="433.6" cy="505.4" rx="5.2" ry="2.7" fill="#16166a"/>
<path d="M1085.2,674 L1066.2,668 M1085.2,674 L1075.2,683.5 M1085.2,674 L1085.2,693" fill="none" stroke="#16166a" stroke-width="1.5" />
<ellipse cx="1065.2" cy="668" rx="2.6" ry="5" fill="#16166a"/>
<circle cx="1073.7" cy="684" r="4.4" fill="#16166a"/>
<ellipse cx="1085.2" cy="693" rx="5.2" ry="2.7" fill="#16166a"/>
<path d="M726.9,984.6 L707.9,978.6 M726.9,984.6 L716.9,994.1 M726.9,984.6 L726.9,1003.6" fill="none" stroke="#16166a" stroke-width="1.5" />
<ellipse cx="706.9" cy="978.6" rx="2.6" ry="5" fill="#16166a"/>
<circle cx="715.4" cy="994.6" r="4.4" fill="#16166a"/>
<ellipse cx="726.9" cy="1003.6" rx="5.2" ry="2.7" fill="#16166a"/>
<defs><linearGradient id="colg" x1="0" x2="1"><stop offset="0" stop-color="#663440"/><stop offset="0.5" stop-color="#6e3a44"/><stop offset="0.55" stop-color="#7a4450"/><stop offset="1" stop-color="#7e4852"/></linearGradient></defs>
<rect x="514.5" y="488" width="14.0" height="133" fill="url(#colg)" />
<ellipse cx="521.5" cy="621" rx="7.0" ry="3.4" fill="#7a4048" stroke="#b83a3a" stroke-width="0.8"/>
<ellipse cx="521.5" cy="488" rx="7.0" ry="3.4" fill="#7e4650" stroke="#c03030" stroke-width="0.9"/>
<rect x="749" y="555.6" width="13" height="133.0" fill="url(#colg)" />
<ellipse cx="755.5" cy="688.6" rx="6.5" ry="3.4" fill="#7a4048" stroke="#b83a3a" stroke-width="0.8"/>
<ellipse cx="755.5" cy="555.6" rx="6.5" ry="3.4" fill="#7e4650" stroke="#c03030" stroke-width="0.9"/>
<rect x="398.1" y="589.6" width="12.799999999999955" height="133.0" fill="url(#colg)" />
<ellipse cx="404.5" cy="722.6" rx="6.399999999999977" ry="3.4" fill="#7a4048" stroke="#b83a3a" stroke-width="0.8"/>
<ellipse cx="404.5" cy="589.6" rx="6.399999999999977" ry="3.4" fill="#7e4650" stroke="#c03030" stroke-width="0.9"/>
<rect x="632" y="656.7" width="12.899999999999977" height="132.69999999999993" fill="url(#colg)" />
<ellipse cx="638.45" cy="789.4" rx="6.449999999999989" ry="3.4" fill="#7a4048" stroke="#b83a3a" stroke-width="0.8"/>
<ellipse cx="638.45" cy="656.7" rx="6.449999999999989" ry="3.4" fill="#7e4650" stroke="#c03030" stroke-width="0.9"/>
<polyline points="366.3,595.4 512.0,470.7 794.3,551.8 648.3,676.5 366.3,595.4" fill="none" stroke="#dcdcdc" stroke-width="0.9" />
<polyline points="366.3,604.6 648.3,685.7 794.3,561.0" fill="none" stroke="#d8d8d8" stroke-width="0.9" />
<polyline points="648.3,676.5 648.3,685.7" fill="none" stroke="#d8d8d8" stroke-width="0.9" />
<polyline points="366.3,595.4 366.3,604.6" fill="none" stroke="#d8d8d8" stroke-width="0.9" />
<polyline points="794.3,551.8 794.3,561.0" fill="none" stroke="#d8d8d8" stroke-width="0.9" />
</g>
<rect x="472.0" y="487.5" width="24" height="17" fill="#ffffff"/>
<rect x="478.1" y="488.6" width="24" height="17" fill="#ffffff"/>
<rect x="484.2" y="489.7" width="24" height="17" fill="#ffffff"/>
<text x="485.7" y="503.2" font-size="10.5" fill="#141414">2.1</text>
<rect x="490.3" y="490.8" width="24" height="17" fill="#ffffff"/>
<rect x="496.4" y="491.9" width="24" height="17" fill="#ffffff"/>
<text x="497.9" y="505.4" font-size="10.5" fill="#141414">1.1</text>
<rect x="502.5" y="493.0" width="24" height="17" fill="#ffffff"/>
<rect x="508.6" y="494.1" width="24" height="17" fill="#ffffff"/>
<text x="510.1" y="507.6" font-size="10.5" fill="#141414">5.5</text>
<rect x="514.7" y="495.2" width="24" height="17" fill="#ffffff"/>
<rect x="520.8" y="496.3" width="24" height="17" fill="#ffffff"/>
<text x="522.3" y="509.8" font-size="10.5" fill="#141414">0.9</text>
<rect x="526.9" y="497.4" width="24" height="17" fill="#ffffff"/>
<rect x="533.0" y="498.5" width="24" height="17" fill="#ffffff"/>
<text x="534.5" y="512.0" font-size="10.5" fill="#141414">3.3</text>
<rect x="539.1" y="499.7" width="24" height="17" fill="#ffffff"/>
<rect x="545.2" y="500.9" width="24" height="17" fill="#ffffff"/>
<text x="546.7" y="514.4" font-size="10.5" fill="#141414">2.7</text>
<rect x="551.3" y="502.2" width="24" height="17" fill="#ffffff"/>
<rect x="557.4" y="503.4" width="24" height="17" fill="#ffffff"/>
<text x="558.9" y="516.9" font-size="10.5" fill="#141414">3.3</text>
<rect x="563.6" y="504.6" width="24" height="17" fill="#ffffff"/>
<rect x="569.7" y="505.8" width="24" height="17" fill="#ffffff"/>
<text x="571.2" y="519.3" font-size="10.5" fill="#141414">4.4</text>
<rect x="575.8" y="507.1" width="24" height="17" fill="#ffffff"/>
<rect x="581.9" y="508.3" width="24" height="17" fill="#ffffff"/>
<text x="583.4" y="521.8" font-size="10.5" fill="#141414">0.5</text>
<rect x="588.0" y="509.5" width="24" height="17" fill="#ffffff"/>
<rect x="593.9" y="511.1" width="24" height="17" fill="#ffffff"/>
<text x="595.4" y="524.6" font-size="10.5" fill="#141414">0.9</text>
<rect x="599.8" y="512.7" width="24" height="17" fill="#ffffff"/>
<rect x="605.6" y="514.3" width="24" height="17" fill="#ffffff"/>
<text x="607.1" y="527.8" font-size="10.5" fill="#141414">3.3</text>
<rect x="611.5" y="515.9" width="24" height="17" fill="#ffffff"/>
<rect x="617.4" y="517.4" width="24" height="17" fill="#ffffff"/>
<text x="618.9" y="530.9" font-size="10.5" fill="#141414">1.5</text>
<rect x="623.3" y="519.0" width="24" height="17" fill="#ffffff"/>
<rect x="629.2" y="520.6" width="24" height="17" fill="#ffffff"/>
<text x="630.7" y="534.1" font-size="10.5" fill="#141414">4.4</text>
<rect x="635.1" y="522.2" width="24" height="17" fill="#ffffff"/>
<rect x="640.9" y="523.8" width="24" height="17" fill="#ffffff"/>
<text x="642.4" y="537.3" font-size="10.5" fill="#141414">1.2</text>
<rect x="646.8" y="525.4" width="24" height="17" fill="#ffffff"/>
<rect x="652.7" y="527.0" width="24" height="17" fill="#ffffff"/>
<text x="654.2" y="540.5" font-size="10.5" fill="#141414">1.5</text>
<rect x="658.6" y="528.6" width="24" height="17" fill="#ffffff"/>
<rect x="664.5" y="530.1" width="24" height="17" fill="#ffffff"/>
<text x="666.0" y="543.6" font-size="10.5" fill="#141414">2.7</text>
<rect x="670.4" y="531.7" width="24" height="17" fill="#ffffff"/>
<rect x="676.2" y="533.3" width="24" height="17" fill="#ffffff"/>
<text x="677.7" y="546.8" font-size="10.5" fill="#141414">5.5</text>
<rect x="682.1" y="534.9" width="24" height="17" fill="#ffffff"/>
<rect x="688.0" y="536.5" width="24" height="17" fill="#ffffff"/>
<text x="689.5" y="550.0" font-size="10.5" fill="#141414">3.7</text>
<rect x="693.6" y="539.0" width="24" height="17" fill="#ffffff"/>
<rect x="699.3" y="541.4" width="24" height="17" fill="#ffffff"/>
<text x="700.8" y="554.9" font-size="10.5" fill="#141414">0.9</text>
<rect x="704.9" y="543.9" width="24" height="17" fill="#ffffff"/>
<rect x="710.5" y="546.3" width="24" height="17" fill="#ffffff"/>
<text x="712.0" y="559.8" font-size="10.5" fill="#141414">1.7</text>
<rect x="716.2" y="548.8" width="24" height="17" fill="#ffffff"/>
<rect x="721.8" y="551.2" width="24" height="17" fill="#ffffff"/>
<text x="723.3" y="564.7" font-size="10.5" fill="#141414">1.5</text>
<rect x="727.5" y="553.7" width="24" height="17" fill="#ffffff"/>
<rect x="733.1" y="556.1" width="24" height="17" fill="#ffffff"/>
<text x="734.6" y="569.6" font-size="10.5" fill="#141414">1.5</text>
<rect x="738.7" y="558.6" width="24" height="17" fill="#ffffff"/>
<rect x="744.4" y="561.0" width="24" height="17" fill="#ffffff"/>
<text x="745.9" y="574.5" font-size="10.5" fill="#141414">1.5</text>
<rect x="750.0" y="563.5" width="24" height="17" fill="#ffffff"/>
<text x="751.5" y="577.0" font-size="10.5" fill="#141414">2.3</text>
<rect x="472.0" y="489.5" width="20" height="14" fill="#ffffff"/>
<text x="473.5" y="501.0" font-size="10.5" fill="#141414">0.9</text>
<rect x="406.0" y="545.5" width="24" height="17" fill="#ffffff"/>
<rect x="412.0" y="547.4" width="24" height="17" fill="#ffffff"/>
<rect x="418.0" y="549.4" width="24" height="17" fill="#ffffff"/>
<text x="419.5" y="562.9" font-size="10.5" fill="#141414">2.2</text>
<rect x="424.0" y="551.3" width="24" height="17" fill="#ffffff"/>
<rect x="430.0" y="553.3" width="24" height="17" fill="#ffffff"/>
<text x="431.5" y="566.8" font-size="10.5" fill="#141414">1.1</text>
<rect x="436.0" y="555.2" width="24" height="17" fill="#ffffff"/>
<rect x="442.0" y="557.1" width="24" height="17" fill="#ffffff"/>
<text x="443.5" y="570.6" font-size="10.5" fill="#141414">1.1</text>
<rect x="448.0" y="559.1" width="24" height="17" fill="#ffffff"/>
<rect x="454.0" y="561.0" width="24" height="17" fill="#ffffff"/>
<text x="455.5" y="574.5" font-size="10.5" fill="#141414">0.8</text>
<rect x="460.0" y="563.0" width="24" height="17" fill="#ffffff"/>
<rect x="466.0" y="564.9" width="24" height="17" fill="#ffffff"/>
<text x="467.5" y="578.4" font-size="10.5" fill="#141414">1.3</text>
<rect x="472.0" y="566.9" width="24" height="17" fill="#ffffff"/>
<rect x="478.0" y="568.8" width="24" height="17" fill="#ffffff"/>
<text x="479.5" y="582.3" font-size="10.5" fill="#141414">2.3</text>
<rect x="484.0" y="570.7" width="24" height="17" fill="#ffffff"/>
<rect x="490.0" y="572.7" width="24" height="17" fill="#ffffff"/>
<text x="491.5" y="586.2" font-size="10.5" fill="#141414">5.5</text>
<rect x="496.0" y="574.6" width="24" height="17" fill="#ffffff"/>
<rect x="502.0" y="576.6" width="24" height="17" fill="#ffffff"/>
<text x="503.5" y="590.1" font-size="10.5" fill="#141414">0.5</text>
<rect x="508.0" y="578.5" width="24" height="17" fill="#ffffff"/>
<rect x="513.9" y="580.8" width="24" height="17" fill="#ffffff"/>
<text x="515.4" y="594.3" font-size="10.5" fill="#141414">2.2</text>
<rect x="519.7" y="583.1" width="24" height="17" fill="#ffffff"/>
<rect x="525.6" y="585.4" width="24" height="17" fill="#ffffff"/>
<text x="527.1" y="598.9" font-size="10.5" fill="#141414">1.3</text>
<rect x="531.4" y="587.6" width="24" height="17" fill="#ffffff"/>
<rect x="537.3" y="589.9" width="24" height="17" fill="#ffffff"/>
<text x="538.8" y="603.4" font-size="10.5" fill="#141414">1.2</text>
<rect x="543.1" y="592.2" width="24" height="17" fill="#ffffff"/>
<rect x="549.0" y="594.5" width="24" height="17" fill="#ffffff"/>
<text x="550.5" y="608.0" font-size="10.5" fill="#141414">4.4</text>
<rect x="555.5" y="596.7" width="24" height="17" fill="#ffffff"/>
<rect x="562.0" y="598.8" width="24" height="17" fill="#ffffff"/>
<text x="563.5" y="612.3" font-size="10.5" fill="#141414">0.8</text>
<rect x="568.5" y="601.0" width="24" height="17" fill="#ffffff"/>
<rect x="575.0" y="603.2" width="24" height="17" fill="#ffffff"/>
<text x="576.5" y="616.7" font-size="10.5" fill="#141414">2.7</text>
<rect x="581.5" y="605.3" width="24" height="17" fill="#ffffff"/>
<rect x="588.0" y="607.5" width="24" height="17" fill="#ffffff"/>
<text x="589.5" y="621.0" font-size="10.5" fill="#141414">5.5</text>
<rect x="594.2" y="608.1" width="24" height="17" fill="#ffffff"/>
<rect x="600.5" y="608.8" width="24" height="17" fill="#ffffff"/>
<text x="602.0" y="622.2" font-size="10.5" fill="#141414">2.2</text>
<rect x="606.8" y="609.4" width="24" height="17" fill="#ffffff"/>
<rect x="613.0" y="610.0" width="24" height="17" fill="#ffffff"/>
<text x="614.5" y="623.5" font-size="10.5" fill="#141414">1.5</text>
<rect x="619.2" y="610.6" width="24" height="17" fill="#ffffff"/>
<rect x="625.5" y="611.2" width="24" height="17" fill="#ffffff"/>
<text x="627.0" y="624.8" font-size="10.5" fill="#141414">0.8</text>
<rect x="631.8" y="611.9" width="24" height="17" fill="#ffffff"/>
<rect x="638.0" y="612.5" width="24" height="17" fill="#ffffff"/>
<text x="639.5" y="626.0" font-size="10.5" fill="#141414">2.7</text>
<rect x="644.3" y="614.1" width="24" height="17" fill="#ffffff"/>
<rect x="650.6" y="615.6" width="24" height="17" fill="#ffffff"/>
<text x="652.1" y="629.1" font-size="10.5" fill="#141414">1.7</text>
<rect x="656.9" y="617.2" width="24" height="17" fill="#ffffff"/>
<rect x="663.1" y="618.8" width="24" height="17" fill="#ffffff"/>
<text x="664.6" y="632.3" font-size="10.5" fill="#141414">4.4</text>
<rect x="669.4" y="620.4" width="24" height="17" fill="#ffffff"/>
<rect x="675.7" y="621.9" width="24" height="17" fill="#ffffff"/>
<text x="677.2" y="635.4" font-size="10.5" fill="#141414">1.2</text>
<rect x="682.0" y="623.5" width="24" height="17" fill="#ffffff"/>
<text x="683.5" y="637.0" font-size="10.5" fill="#141414">2.7</text>
<rect x="406.0" y="547.5" width="20" height="14" fill="#ffffff"/>
<text x="407.5" y="559.0" font-size="10.5" fill="#141414">1.9</text>
<rect x="429.0" y="599.0" width="30" height="16" fill="#ffffff"/>
<rect x="432.4" y="594.0" width="30" height="16" fill="#ffffff"/>
<rect x="435.8" y="589.0" width="30" height="16" fill="#ffffff"/>
<text x="437.2" y="601.5" font-size="10.5" fill="#141414">3.7</text>
<rect x="439.1" y="584.0" width="30" height="16" fill="#ffffff"/>
<rect x="442.5" y="579.0" width="30" height="16" fill="#ffffff"/>
<text x="444.0" y="591.5" font-size="10.5" fill="#141414">2.1</text>
<rect x="445.9" y="574.0" width="30" height="16" fill="#ffffff"/>
<rect x="449.2" y="569.0" width="30" height="16" fill="#ffffff"/>
<text x="450.8" y="581.5" font-size="10.5" fill="#141414">0.8</text>
<rect x="452.6" y="564.0" width="30" height="16" fill="#ffffff"/>
<rect x="456.0" y="559.0" width="30" height="16" fill="#ffffff"/>
<text x="457.5" y="571.5" font-size="10.5" fill="#141414">3.3</text>
<rect x="460.8" y="554.9" width="30" height="16" fill="#ffffff"/>
<rect x="465.6" y="550.8" width="30" height="16" fill="#ffffff"/>
<text x="467.1" y="563.3" font-size="10.5" fill="#141414">1.1</text>
<rect x="470.3" y="546.7" width="30" height="16" fill="#ffffff"/>
<rect x="475.1" y="542.6" width="30" height="16" fill="#ffffff"/>
<text x="476.6" y="555.1" font-size="10.5" fill="#141414">1.5</text>
<rect x="479.9" y="538.4" width="30" height="16" fill="#ffffff"/>
<rect x="484.7" y="534.3" width="30" height="16" fill="#ffffff"/>
<text x="486.2" y="546.8" font-size="10.5" fill="#141414">3.3</text>
<rect x="489.4" y="530.2" width="30" height="16" fill="#ffffff"/>
<rect x="494.2" y="526.1" width="30" height="16" fill="#ffffff"/>
<text x="495.7" y="538.6" font-size="10.5" fill="#141414">5.5</text>
<rect x="499.0" y="522.0" width="30" height="16" fill="#ffffff"/>
<rect x="504.2" y="518.0" width="30" height="16" fill="#ffffff"/>
<text x="505.7" y="530.5" font-size="10.5" fill="#141414">3.7</text>
<rect x="509.4" y="514.0" width="30" height="16" fill="#ffffff"/>
<rect x="514.6" y="510.0" width="30" height="16" fill="#ffffff"/>
<text x="516.1" y="522.5" font-size="10.5" fill="#141414">0.5</text>
<rect x="519.8" y="506.0" width="30" height="16" fill="#ffffff"/>
<rect x="525.0" y="502.0" width="30" height="16" fill="#ffffff"/>
<text x="526.5" y="514.5" font-size="10.5" fill="#141414">3.3</text>
<rect x="530.3" y="499.1" width="30" height="16" fill="#ffffff"/>
<rect x="535.7" y="496.2" width="30" height="16" fill="#ffffff"/>
<text x="537.2" y="508.7" font-size="10.5" fill="#141414">3.3</text>
<rect x="541.0" y="493.3" width="30" height="16" fill="#ffffff"/>
<rect x="546.3" y="490.4" width="30" height="16" fill="#ffffff"/>
<text x="547.8" y="502.9" font-size="10.5" fill="#141414">4.4</text>
<rect x="551.7" y="487.6" width="30" height="16" fill="#ffffff"/>
<rect x="557.0" y="484.7" width="30" height="16" fill="#ffffff"/>
<text x="558.5" y="497.2" font-size="10.5" fill="#141414">2.1</text>
<rect x="562.3" y="481.8" width="30" height="16" fill="#ffffff"/>
<rect x="567.7" y="478.9" width="30" height="16" fill="#ffffff"/>
<text x="569.2" y="491.4" font-size="10.5" fill="#141414">3.7</text>
<rect x="573.0" y="476.0" width="30" height="16" fill="#ffffff"/>
<text x="574.5" y="488.5" font-size="10.5" fill="#141414">1.6 8</text>
<rect x="429.0" y="601.0" width="26" height="13" fill="#ffffff"/>
<text x="430.5" y="611.5" font-size="10.5" fill="#141414">1.0.8</text>
<rect x="575.0" y="642.0" width="30" height="16" fill="#ffffff"/>
<rect x="580.0" y="638.7" width="30" height="16" fill="#ffffff"/>
<rect x="585.0" y="635.3" width="30" height="16" fill="#ffffff"/>
<text x="586.5" y="647.8" font-size="10.5" fill="#141414">3.7</text>
<rect x="590.0" y="632.0" width="30" height="16" fill="#ffffff"/>
<rect x="596.2" y="629.5" width="30" height="16" fill="#ffffff"/>
<text x="597.8" y="642.0" font-size="10.5" fill="#141414">2.3</text>
<rect x="602.5" y="627.0" width="30" height="16" fill="#ffffff"/>
<rect x="608.8" y="624.5" width="30" height="16" fill="#ffffff"/>
<text x="610.2" y="637.0" font-size="10.5" fill="#141414">0.9</text>
<rect x="615.0" y="622.0" width="30" height="16" fill="#ffffff"/>
<rect x="621.2" y="619.5" width="30" height="16" fill="#ffffff"/>
<text x="622.8" y="632.0" font-size="10.5" fill="#141414">4.4</text>
<rect x="627.5" y="617.0" width="30" height="16" fill="#ffffff"/>
<rect x="633.8" y="614.5" width="30" height="16" fill="#ffffff"/>
<text x="635.2" y="627.0" font-size="10.5" fill="#141414">3.3</text>
<rect x="640.0" y="612.0" width="30" height="16" fill="#ffffff"/>
<rect x="643.8" y="607.0" width="30" height="16" fill="#ffffff"/>
<text x="645.2" y="619.5" font-size="10.5" fill="#141414">2.1</text>
<rect x="647.5" y="602.0" width="30" height="16" fill="#ffffff"/>
<rect x="651.2" y="597.0" width="30" height="16" fill="#ffffff"/>
<text x="652.8" y="609.5" font-size="10.5" fill="#141414">1.1</text>
<rect x="655.0" y="592.0" width="30" height="16" fill="#ffffff"/>
<rect x="657.9" y="586.3" width="30" height="16" fill="#ffffff"/>
<text x="659.4" y="598.8" font-size="10.5" fill="#141414">1.1</text>
<rect x="660.7" y="580.6" width="30" height="16" fill="#ffffff"/>
<rect x="663.6" y="574.9" width="30" height="16" fill="#ffffff"/>
<text x="665.1" y="587.4" font-size="10.5" fill="#141414">1.5</text>
<rect x="666.4" y="569.1" width="30" height="16" fill="#ffffff"/>
<rect x="669.3" y="563.4" width="30" height="16" fill="#ffffff"/>
<text x="670.8" y="575.9" font-size="10.5" fill="#141414">4.4</text>
<rect x="672.1" y="557.7" width="30" height="16" fill="#ffffff"/>
<rect x="675.0" y="552.0" width="30" height="16" fill="#ffffff"/>
<text x="676.5" y="564.5" font-size="10.5" fill="#141414">2.3</text>
<rect x="679.9" y="548.0" width="30" height="16" fill="#ffffff"/>
<rect x="684.8" y="544.0" width="30" height="16" fill="#ffffff"/>
<text x="686.3" y="556.5" font-size="10.5" fill="#141414">2.2</text>
<rect x="689.7" y="540.0" width="30" height="16" fill="#ffffff"/>
<rect x="694.6" y="536.0" width="30" height="16" fill="#ffffff"/>
<text x="696.1" y="548.5" font-size="10.5" fill="#141414">3.7</text>
<rect x="699.4" y="532.0" width="30" height="16" fill="#ffffff"/>
<rect x="704.3" y="528.0" width="30" height="16" fill="#ffffff"/>
<text x="705.8" y="540.5" font-size="10.5" fill="#141414">0.8</text>
<rect x="709.2" y="524.0" width="30" height="16" fill="#ffffff"/>
<rect x="714.1" y="520.0" width="30" height="16" fill="#ffffff"/>
<text x="715.6" y="532.5" font-size="10.5" fill="#141414">5.5</text>
<rect x="719.0" y="516.0" width="30" height="16" fill="#ffffff"/>
<text x="720.5" y="528.5" font-size="10.5" fill="#141414">0.7 4</text>
<rect x="575.0" y="644.0" width="26" height="13" fill="#ffffff"/>
<text x="576.5" y="654.5" font-size="10.5" fill="#141414">0.0.9</text>
<line x1="521.9" y1="431.3" x2="521.9" y2="470" stroke="#0b6b0b" stroke-width="2.2" />
<path d="M515,471 L528.6,471 L521.9,486 Z" fill="#075a07" stroke="none" stroke-width="1" />
<ellipse cx="521.9" cy="471" rx="6.8" ry="2.5" fill="#1a8a1a"/>
<line x1="404.8" y1="523" x2="404.8" y2="568" stroke="#0b6b0b" stroke-width="2.2" />
<path d="M397.5,570 L412,570 L404.8,586 Z" fill="#075a07" stroke="none" stroke-width="1" />
<ellipse cx="404.8" cy="570" rx="7.2" ry="2.6" fill="#1a8a1a"/>
<line x1="404.8" y1="590" x2="404.8" y2="645" stroke="#2a5a2a" stroke-width="1.5" />
<ellipse cx="404.8" cy="608" rx="6.4" ry="2.4" fill="#3a8a3a"/>
<rect x="521.2" y="415" width="25.399999999999977" height="14.5" fill="#f1f1f1" />
<text x="523.7" y="426.2" font-size="11.5" fill="#111" font-weight="normal" font-style="normal" text-anchor="start" textLength="20.4" lengthAdjust="spacingAndGlyphs" >75.6</text>
<rect x="404" y="507" width="25.80000000000001" height="14.700000000000045" fill="#f1f1f1" />
<text x="406.5" y="518.4" font-size="11.5" fill="#111" font-weight="normal" font-style="normal" text-anchor="start" textLength="20.8" lengthAdjust="spacingAndGlyphs" >87.5</text>
<rect x="520.5" y="532.8" width="26.100000000000023" height="14.200000000000045" fill="#f1f1f1" />
<text x="523.0" y="543.7" font-size="11.5" fill="#111" font-weight="normal" font-style="normal" text-anchor="start" textLength="21.1" lengthAdjust="spacingAndGlyphs" >75.6</text>
<rect x="404.1" y="644.6" width="25.299999999999955" height="13.399999999999977" fill="#f1f1f1" />
<text x="406.6" y="654.7" font-size="11.5" fill="#111" font-weight="normal" font-style="normal" text-anchor="start" textLength="20.3" lengthAdjust="spacingAndGlyphs" >87.5</text>
</svg></body></html>
